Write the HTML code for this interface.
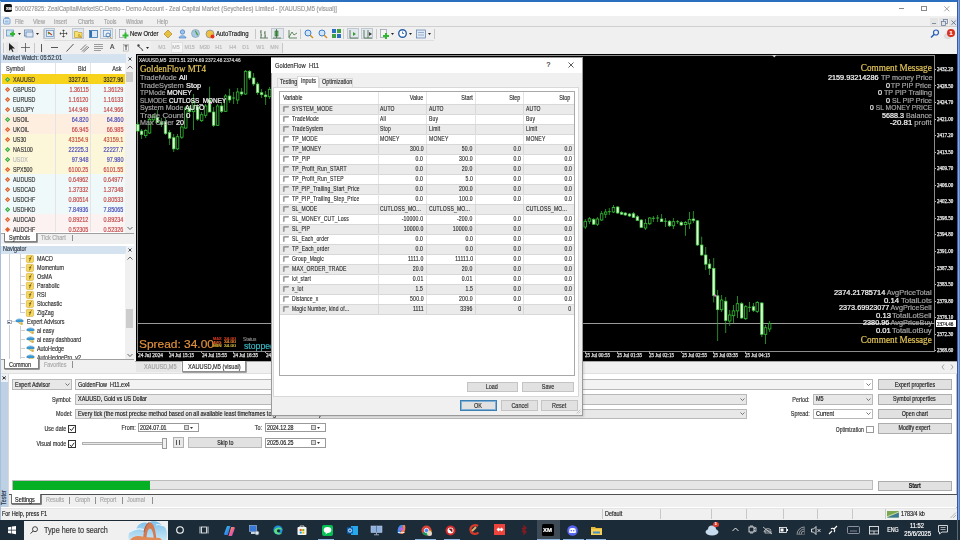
<!DOCTYPE html>
<html><head><meta charset="utf-8">
<style>
*{box-sizing:border-box;margin:0;padding:0}
html,body{width:960px;height:540px;overflow:hidden;background:#f0f0f0;font-family:"Liberation Sans",sans-serif;color:#222}
.a{position:absolute}
.t{position:absolute;white-space:pre;line-height:1;-webkit-text-stroke:0.18px currentColor}
svg{position:absolute;overflow:visible}
</style></head><body>
<div class="a" style="left:0px;top:0px;width:960px;height:520px;background:#f0f0f0;"></div>
<div class="a" style="left:0px;top:0px;width:960px;height:16px;background:#ffffff;"></div>
<div class="a" style="left:0px;top:0px;width:960px;height:1.5px;background:#2b70c0;"></div>
<div class="a" style="left:4.4px;top:4.1px;width:8px;height:8.4px;background:#111;border-radius:1.8px"></div>
<div class="t" style="left:5.60px;top:6.61px;font-size:4px;color:#fff;font-weight:bold;transform:scaleX(0.9333);transform-origin:0 0;font-family:'Liberation Sans',sans-serif;">XM</div>
<div class="t" style="left:15.00px;top:5.17px;font-size:7px;color:#979797;transform:scaleX(0.8352);transform-origin:0 0;font-family:'Liberation Sans',sans-serif;">500027825: ZealCapitalMarketSC-Demo - Demo Account - Zeal Capital Market (Seychelles) Limited - [XAUUSD,M5 (visual)]</div>
<div class="a" style="left:899.3px;top:8.2px;width:4.8px;height:0.8px;background:#8a8a8a;"></div>
<div class="a" style="left:921px;top:6px;width:5.8px;height:5.2px;background:transparent;border:0.8px solid #8a8a8a"></div>
<svg style="left:944.2px;top:5.8px" width="6" height="6"><path d="M0.3 0.3L5.3 5.3M5.3 0.3L0.3 5.3" stroke="#8a8a8a" stroke-width="0.8"/></svg>
<div class="a" style="left:956.6px;top:0px;width:3.4px;height:520px;background:linear-gradient(90deg,#3458a8 0,#3458a8 1px,#7ea4e0 1.2px,#8aaee6 2.2px,#4a6cb8 2.6px,#4a6cb8 3.4px);"></div>
<div class="a" style="left:0px;top:1px;width:1px;height:519px;background:#a8c0dc;"></div>
<div class="a" style="left:1px;top:16px;width:956px;height:10px;background:#f0f0f0;"></div>
<div class="a" style="left:1px;top:25.6px;width:956px;height:0.9px;background:#d0d0d0;"></div>
<svg style="left:3px;top:17px" width="8" height="8"><rect x="0.5" y="1.5" width="6.5" height="5.5" rx="1" fill="#d8e6f6" stroke="#6a98cc" stroke-width="0.8"/><path d="M2 1.5v-1h3.5v1" stroke="#6a98cc" stroke-width="0.8" fill="none"/><rect x="2" y="3.5" width="3.5" height="2" fill="#9cbce0"/></svg>
<div class="t" style="left:14.70px;top:18.74px;font-size:6.8px;color:#a2a2a2;transform:scaleX(0.7940);transform-origin:0 0;font-family:'Liberation Sans',sans-serif;">File</div>
<div class="t" style="left:33.00px;top:18.74px;font-size:6.8px;color:#a2a2a2;transform:scaleX(0.8210);transform-origin:0 0;font-family:'Liberation Sans',sans-serif;">View</div>
<div class="t" style="left:54.00px;top:18.74px;font-size:6.8px;color:#a2a2a2;transform:scaleX(0.7644);transform-origin:0 0;font-family:'Liberation Sans',sans-serif;">Insert</div>
<div class="t" style="left:78.00px;top:18.74px;font-size:6.8px;color:#a2a2a2;transform:scaleX(0.7989);transform-origin:0 0;font-family:'Liberation Sans',sans-serif;">Charts</div>
<div class="t" style="left:104.00px;top:18.74px;font-size:6.8px;color:#a2a2a2;transform:scaleX(0.7874);transform-origin:0 0;font-family:'Liberation Sans',sans-serif;">Tools</div>
<div class="t" style="left:126.00px;top:18.74px;font-size:6.8px;color:#a2a2a2;transform:scaleX(0.7029);transform-origin:0 0;font-family:'Liberation Sans',sans-serif;">Window</div>
<div class="t" style="left:157.00px;top:18.74px;font-size:6.8px;color:#a2a2a2;transform:scaleX(0.7865);transform-origin:0 0;font-family:'Liberation Sans',sans-serif;">Help</div>
<div class="a" style="left:929.5px;top:17.5px;width:8.8px;height:8.3px;background:#e4e4e4;"></div>
<div class="a" style="left:939px;top:17.5px;width:8.8px;height:8.3px;background:#e4e4e4;"></div>
<div class="a" style="left:948.5px;top:17.5px;width:8.8px;height:8.3px;background:#e4e4e4;"></div>
<div class="a" style="left:932.2px;top:22.6px;width:3.4px;height:1px;background:#8090a0;"></div>
<svg style="left:940.5px;top:18.8px" width="7" height="7"><rect x="2.5" y="0.5" width="4" height="4" fill="none" stroke="#7080a0" stroke-width="0.8"/><rect x="0.5" y="2.5" width="4" height="4" fill="#e3e3e3" stroke="#7080a0" stroke-width="0.8"/></svg>
<svg style="left:951px;top:19.6px" width="6" height="6"><path d="M0.5 0.5L4.8 4.8M4.8 0.5L0.5 4.8" stroke="#607090" stroke-width="0.9"/></svg>
<div class="a" style="left:3px;top:29px;width:1px;height:10px;background:#c8c8c8;"></div>
<div class="a" style="left:42.5px;top:29px;width:1px;height:10px;background:#c8c8c8;"></div>
<div class="a" style="left:115.3px;top:29px;width:1px;height:10px;background:#c8c8c8;"></div>
<div class="a" style="left:434px;top:29px;width:1px;height:10px;background:#c8c8c8;"></div>
<div class="a" style="left:44px;top:40px;width:390px;height:0.8px;background:#dedede;"></div>
<svg style="left:6px;top:29px" width="10" height="10"><rect x="0.5" y="1" width="7" height="6" fill="#cfe0f0" stroke="#5a8cc0" stroke-width="0.7"/><path d="M4 5h5M6.5 2.5v5" stroke="#2eb82e" stroke-width="2"/></svg>
<svg style="left:17.5px;top:32.5px" width="4" height="3"><path d="M0 0h3l-1.5 2z" fill="#222"/></svg>
<svg style="left:24px;top:29px" width="10" height="10"><rect x="0.5" y="1" width="8" height="6" fill="#dde8f4" stroke="#5a7ca8" stroke-width="0.7"/><rect x="2" y="3" width="7" height="5" fill="#dde8f4" stroke="#5a7ca8" stroke-width="0.7"/></svg>
<svg style="left:35.5px;top:32.5px" width="4" height="3"><path d="M0 0h3l-1.5 2z" fill="#222"/></svg>
<div class="a" style="left:44px;top:28px;width:11px;height:11px;background:#dde6ee;border:0.7px solid #b8c4d0"></div>
<svg style="left:46px;top:30px" width="10" height="10"><rect x="0.5" y="0.5" width="7" height="6" fill="#e8f0f8" stroke="#5a8cc0" stroke-width="0.7"/><path d="M2 2l4 3" stroke="#d04020" stroke-width="1.2"/><path d="M2 4l2 -1" stroke="#30a030" stroke-width="1.2"/></svg>
<svg style="left:59px;top:29px" width="10" height="10"><path d="M4.5 1v7M1 4.5h7" stroke="#444" stroke-width="0.7"/><path d="M4.5 0.5l-1.5 1.5h3zM4.5 8.5l-1.5-1.5h3zM0.5 4.5l1.5-1.5v3zM8.5 4.5l-1.5-1.5v3z" fill="#444"/></svg>
<div class="a" style="left:72px;top:28px;width:12px;height:11px;background:#e2e8ee;border:0.7px solid #c0c8d0"></div>
<svg style="left:74px;top:30px" width="10" height="10"><path d="M0.5 1.5h3l1 1h3.5v5h-7.5z" fill="#f8e070" stroke="#b89020" stroke-width="0.6"/><path d="M5 4l2.5 3.5L4 6z" fill="#f0d040" stroke="#a08020" stroke-width="0.5"/></svg>
<svg style="left:89px;top:30px" width="10" height="10"><rect x="0.5" y="0.5" width="8" height="7" fill="#dce8f4" stroke="#3070b0" stroke-width="0.8"/><rect x="1" y="1" width="2" height="6" fill="#3070b0"/></svg>
<div class="a" style="left:100.3px;top:28.2px;width:12.5px;height:10.6px;background:#e2e8ee;border:0.7px solid #c0c8d0"></div>
<svg style="left:102.5px;top:30px" width="10" height="10"><rect x="0.5" y="0.5" width="7" height="6" fill="#e8f0f8" stroke="#6090c0" stroke-width="0.7"/><circle cx="5" cy="5" r="2" fill="none" stroke="#3070b0" stroke-width="0.8"/><path d="M6.5 6.5l2 2" stroke="#d09020" stroke-width="1"/></svg>
<svg style="left:119px;top:29px" width="10" height="10"><rect x="0.5" y="0.5" width="6" height="8" fill="#f4f4f4" stroke="#8090a0" stroke-width="0.6"/><path d="M3.5 6.5h6M6.5 3.5v6" stroke="#2eb82e" stroke-width="2"/></svg>
<div class="t" style="left:129.70px;top:29.97px;font-size:7px;color:#1a1a1a;transform:scaleX(0.8422);transform-origin:0 0;font-family:'Liberation Sans',sans-serif;">New Order</div>
<svg style="left:163px;top:29px" width="10" height="10"><path d="M1 5l4-4 4 4-4 4z" fill="#e8c040" stroke="#a07818" stroke-width="0.6"/></svg>
<svg style="left:177.5px;top:29px" width="10" height="10"><circle cx="4.5" cy="3" r="2.2" fill="#9cc4ec" stroke="#3070c0" stroke-width="0.6"/><path d="M1 9c0-3 7-3 7 0z" fill="#9cc4ec" stroke="#3070c0" stroke-width="0.6"/></svg>
<svg style="left:191px;top:29px" width="10" height="10"><circle cx="4.5" cy="4.5" r="4" fill="#a8c8e0" stroke="#6a8aa8" stroke-width="0.5"/><path d="M4 2c2 1 1 3 3 4" stroke="#40a040" stroke-width="1.2"/></svg>
<svg style="left:205px;top:29px" width="10" height="10"><circle cx="5" cy="5" r="4" fill="#f0c040" stroke="#6080b0" stroke-width="0.6"/><circle cx="7.5" cy="7.5" r="2" fill="#e03020"/></svg>
<div class="t" style="left:216.00px;top:29.97px;font-size:7px;color:#1a1a1a;transform:scaleX(0.8581);transform-origin:0 0;font-family:'Liberation Sans',sans-serif;">AutoTrading</div>
<div class="a" style="left:254.5px;top:29px;width:1px;height:10px;background:#c8c8c8;"></div>
<svg style="left:258.5px;top:29px" width="10" height="10"><path d="M2 1v8M1 3h1M2 6h1M6 2v7M5 4h1M6 7h1M1 9h8" stroke="#406040" stroke-width="0.8"/></svg>
<div class="a" style="left:271px;top:28px;width:12.5px;height:11px;background:#e2e8ee;border:0.7px solid #c0c8d0"></div>
<svg style="left:273.3px;top:29px" width="10" height="10"><rect x="2" y="2" width="3" height="5" fill="#60c060" stroke="#306030" stroke-width="0.6"/><path d="M3.5 0v9M0 9h8" stroke="#306030" stroke-width="0.7"/></svg>
<svg style="left:287.5px;top:29px" width="10" height="10"><path d="M1 1v8h8M1 8l3-5 2 3 3-2" fill="none" stroke="#407040" stroke-width="0.8"/></svg>
<div class="a" style="left:300px;top:29px;width:1px;height:10px;background:#c8c8c8;"></div>
<svg style="left:303.5px;top:29px" width="10" height="10"><circle cx="4" cy="4" r="3" fill="#cfe4f8" stroke="#3a80c8" stroke-width="1"/><path d="M6 6l3 3" stroke="#d09020" stroke-width="1.4"/></svg>
<svg style="left:317.5px;top:29px" width="10" height="10"><circle cx="4" cy="4" r="3" fill="#cfe4f8" stroke="#3a80c8" stroke-width="1"/><path d="M6 6l3 3" stroke="#d09020" stroke-width="1.4"/></svg>
<svg style="left:332px;top:29px" width="10" height="10"><rect x="0" y="0" width="4" height="4" fill="#2a70c0"/><rect x="5" y="0" width="4" height="4" fill="#40a040"/><rect x="0" y="5" width="4" height="4" fill="#40a040"/><rect x="5" y="5" width="4" height="4" fill="#2a70c0"/></svg>
<div class="a" style="left:343px;top:29px;width:1px;height:10px;background:#c8c8c8;"></div>
<div class="a" style="left:347px;top:28px;width:12px;height:11px;background:#e2e8ee;border:0.7px solid #c0c8d0"></div>
<svg style="left:349px;top:29px" width="10" height="10"><path d="M1 1v8h8" fill="none" stroke="#406040" stroke-width="0.8"/><path d="M4 3l3 2-3 2z" fill="#30a030"/></svg>
<div class="a" style="left:361px;top:28px;width:12px;height:11px;background:#e2e8ee;border:0.7px solid #c0c8d0"></div>
<svg style="left:363px;top:29px" width="10" height="10"><path d="M1 1v8h8M5 1v8" fill="none" stroke="#406040" stroke-width="0.8"/><path d="M6 3l3 2-3 2z" fill="#404040"/></svg>
<div class="a" style="left:376px;top:29px;width:1px;height:10px;background:#c8c8c8;"></div>
<svg style="left:380px;top:29px" width="10" height="10"><rect x="0.5" y="0.5" width="6" height="8" fill="#f4f4f4" stroke="#8090a0" stroke-width="0.6"/><path d="M3 7h6M6 4v6" stroke="#2eb82e" stroke-width="2"/></svg>
<svg style="left:391px;top:32.5px" width="4" height="3"><path d="M0 0h3l-1.5 2z" fill="#222"/></svg>
<svg style="left:398px;top:29px" width="10" height="10"><circle cx="4.5" cy="4.5" r="3.8" fill="#fff" stroke="#2a60a8" stroke-width="1.4"/><path d="M4.5 2.5v2h1.5" stroke="#2a60a8" stroke-width="0.8" fill="none"/></svg>
<svg style="left:409px;top:32.5px" width="4" height="3"><path d="M0 0h3l-1.5 2z" fill="#222"/></svg>
<svg style="left:416px;top:29px" width="10" height="10"><rect x="0.5" y="1" width="9" height="8" fill="#dde8f4" stroke="#5a7ca8" stroke-width="0.7"/><path d="M2 6h6M2 3.5h6" stroke="#8aa0c0" stroke-width="0.8"/></svg>
<svg style="left:428px;top:32.5px" width="4" height="3"><path d="M0 0h3l-1.5 2z" fill="#222"/></svg>
<svg style="left:930px;top:29px" width="10" height="10"><circle cx="6" cy="3.5" r="2.5" fill="none" stroke="#2a60b8" stroke-width="1.2"/><path d="M4.3 5.2L1 8.5" stroke="#2a60b8" stroke-width="1.5"/></svg>
<svg style="left:944px;top:31px" width="10" height="10"><ellipse cx="4" cy="5" rx="3.5" ry="2.5" fill="#e0e0e0" stroke="#c0c0c0" stroke-width="0.5"/></svg>
<div class="a" style="left:947.2px;top:28.9px;width:7.8px;height:8.2px;background:#d93020;border-radius:50%"></div>
<div class="t" style="left:949.57px;top:30.54px;font-size:5.5px;color:#fff;font-weight:bold;transform-origin:50% 0;font-family:'Liberation Sans',sans-serif;">1</div>
<div class="a" style="left:3px;top:43px;width:1px;height:10px;background:#c8c8c8;"></div>
<div class="a" style="left:33.7px;top:43px;width:1px;height:10px;background:#c8c8c8;"></div>
<div class="a" style="left:154px;top:43px;width:1px;height:10px;background:#c8c8c8;"></div>
<div class="a" style="left:282px;top:43px;width:1px;height:10px;background:#c8c8c8;"></div>
<div class="a" style="left:6px;top:42px;width:12px;height:11px;background:#e8e8e8;"></div>
<svg style="left:8px;top:43px" width="10" height="10"><path d="M1 0v8l2-2 1.5 3 1-0.5-1.5-3h3z" fill="#222"/></svg>
<svg style="left:21px;top:43px" width="10" height="10"><path d="M4.5 0v9M0 4.5h9" stroke="#555" stroke-width="0.8"/></svg>
<svg style="left:40px;top:43px" width="4" height="10"><path d="M1.5 1v8" stroke="#444" stroke-width="0.9"/></svg>
<svg style="left:51px;top:43px" width="10" height="10"><path d="M0 4.5h7" stroke="#444" stroke-width="0.9"/></svg>
<svg style="left:66px;top:43px" width="10" height="10"><path d="M0.5 8.5L7.5 1" stroke="#444" stroke-width="0.9"/></svg>
<svg style="left:80px;top:43px" width="10" height="10"><path d="M0.5 7L6 1.5M2 8.5L7.5 3M3.5 9L9 4" stroke="#555" stroke-width="0.8"/></svg>
<svg style="left:94px;top:43px" width="10" height="10"><path d="M0 1.5h9M0 3.5h9M0 5.5h9M0 7.5h7" stroke="#777" stroke-width="0.7"/></svg>
<div class="t" style="left:109.60px;top:44.41px;font-size:6.6px;color:#444;transform:scaleX(0.9995);transform-origin:0 0;font-family:'Liberation Sans',sans-serif;">A</div>
<svg style="left:123.3px;top:44px" width="7" height="8"><rect x="0.4" y="0.4" width="5.2" height="6.6" fill="#f8f8f8" stroke="#909090" stroke-width="0.5"/><path d="M1.5 1.8h3M3 1.8v4.2" stroke="#444" stroke-width="1"/></svg>
<svg style="left:137px;top:43.5px" width="10" height="10"><circle cx="1.5" cy="1.5" r="1.2" fill="#444"/><path d="M1.5 2.5l4 3" stroke="#444" stroke-width="0.9"/><path d="M4.5 5l2 1.2L5 7z" fill="#444"/></svg>
<svg style="left:146px;top:47px" width="4" height="3"><path d="M0 0h3l-1.5 2z" fill="#222"/></svg>
<div class="a" style="left:151px;top:41px;width:131px;height:12.5px;background:#ececec;"></div>
<div class="a" style="left:171px;top:41.5px;width:12px;height:11.5px;background:#f6f6f6;border:0.6px solid #e0e0e0"></div>
<div class="t" style="left:158.37px;top:45.09px;font-size:5.8px;color:#b8b8b8;transform:scaleX(0.9200);transform-origin:50% 0;font-family:'Liberation Sans',sans-serif;">M1</div>
<div class="t" style="left:172.17px;top:45.09px;font-size:5.8px;color:#b8b8b8;transform:scaleX(0.9200);transform-origin:50% 0;font-family:'Liberation Sans',sans-serif;">M5</div>
<div class="t" style="left:184.36px;top:45.09px;font-size:5.8px;color:#b8b8b8;transform:scaleX(0.9200);transform-origin:50% 0;font-family:'Liberation Sans',sans-serif;">M15</div>
<div class="t" style="left:199.06px;top:45.09px;font-size:5.8px;color:#b8b8b8;transform:scaleX(0.9200);transform-origin:50% 0;font-family:'Liberation Sans',sans-serif;">M30</div>
<div class="t" style="left:214.79px;top:45.09px;font-size:5.8px;color:#b8b8b8;transform:scaleX(0.9200);transform-origin:50% 0;font-family:'Liberation Sans',sans-serif;">H1</div>
<div class="t" style="left:228.69px;top:45.09px;font-size:5.8px;color:#b8b8b8;transform:scaleX(0.9200);transform-origin:50% 0;font-family:'Liberation Sans',sans-serif;">H4</div>
<div class="t" style="left:242.49px;top:45.09px;font-size:5.8px;color:#b8b8b8;transform:scaleX(0.9200);transform-origin:50% 0;font-family:'Liberation Sans',sans-serif;">D1</div>
<div class="t" style="left:256.45px;top:45.09px;font-size:5.8px;color:#b8b8b8;transform:scaleX(0.9200);transform-origin:50% 0;font-family:'Liberation Sans',sans-serif;">W1</div>
<div class="t" style="left:270.09px;top:45.09px;font-size:5.8px;color:#b8b8b8;transform:scaleX(0.9200);transform-origin:50% 0;font-family:'Liberation Sans',sans-serif;">MN</div>
<div class="a" style="left:1px;top:54px;width:133px;height:189px;background:#ffffff;"></div>
<div class="a" style="left:1px;top:54px;width:125px;height:8.5px;background:#d5e3f1;"></div>
<div class="a" style="left:126px;top:54px;width:8px;height:8.5px;background:#eef2f6;"></div>
<div class="t" style="left:3.00px;top:54.84px;font-size:6.8px;color:#303a48;transform:scaleX(0.8202);transform-origin:0 0;font-family:'Liberation Sans',sans-serif;">Market Watch: 05:52:01</div>
<svg style="left:128px;top:56.6px" width="5" height="5"><path d="M0.5 0.5L3.5 3.5M3.5 0.5L0.5 3.5" stroke="#333" stroke-width="0.9"/></svg>
<div class="a" style="left:1px;top:62.5px;width:124px;height:11.5px;background:#ffffff;"></div>
<div class="a" style="left:54.5px;top:62.5px;width:0.8px;height:11.5px;background:#e4e4e4;"></div>
<div class="a" style="left:89.5px;top:62.5px;width:0.8px;height:11.5px;background:#e4e4e4;"></div>
<div class="a" style="left:1px;top:73.5px;width:124px;height:0.6px;background:#e8e8e8;"></div>
<div class="t" style="left:5.50px;top:64.87px;font-size:7px;color:#383838;transform:scaleX(0.8000);transform-origin:0 0;font-family:'Liberation Sans',sans-serif;">Symbol</div>
<div class="t" style="left:75.88px;top:64.87px;font-size:7px;color:#383838;transform:scaleX(0.8000);transform-origin:100% 0;font-family:'Liberation Sans',sans-serif;">Bid</div>
<div class="t" style="left:109.83px;top:64.87px;font-size:7px;color:#383838;transform:scaleX(0.8000);transform-origin:100% 0;font-family:'Liberation Sans',sans-serif;">Ask</div>
<div class="a" style="left:125px;top:62.5px;width:8.5px;height:170px;background:#f0f0f0;"></div>
<div class="a" style="left:125.5px;top:71.5px;width:7.5px;height:10px;background:#cdcdcd;"></div>
<svg style="left:126.5px;top:64.5px" width="6" height="5"><path d="M0.5 3.5L3 1l2.5 2.5" fill="none" stroke="#555" stroke-width="0.9"/></svg>
<svg style="left:126.5px;top:226px" width="6" height="5"><path d="M0.5 1L3 3.5L5.5 1" fill="none" stroke="#555" stroke-width="0.9"/></svg>
<div class="a" style="left:2px;top:74.2px;width:123px;height:10px;background:#f8d31c;"></div>
<div class="a" style="left:54.5px;top:74.2px;width:0.7px;height:10px;background:#f8d31c;"></div>
<div class="a" style="left:89.5px;top:74.2px;width:0.7px;height:10px;background:#f8d31c;"></div>
<div class="a" style="left:2px;top:83.60000000000001px;width:123px;height:0.6px;background:#e8c818;"></div>
<svg style="left:4.5px;top:76.60000000000001px" width="6" height="6"><path d="M2.6 0L5.2 2.6L2.6 5.2L0 2.6z" fill="#30a83a"/><circle cx="2.6" cy="2.6" r="1" fill="#a0e0a0"/></svg>
<div class="t" style="left:12.60px;top:75.87px;font-size:7px;color:#383838;transform:scaleX(0.7600);transform-origin:0 0;font-family:'Liberation Sans',sans-serif;">XAUUSD</div>
<div class="t" style="left:63.00px;top:75.87px;font-size:7px;color:#2a2a2a;transform:scaleX(0.7800);transform-origin:100% 0;font-family:'Liberation Sans',sans-serif;">3327.61</div>
<div class="t" style="left:97.70px;top:75.87px;font-size:7px;color:#2a2a2a;transform:scaleX(0.7800);transform-origin:100% 0;font-family:'Liberation Sans',sans-serif;">3327.96</div>
<div class="a" style="left:2px;top:84.2px;width:123px;height:10px;background:#eff9f9;"></div>
<div class="a" style="left:54.5px;top:84.2px;width:0.7px;height:10px;background:#e4e4e4;"></div>
<div class="a" style="left:89.5px;top:84.2px;width:0.7px;height:10px;background:#e4e4e4;"></div>
<div class="a" style="left:2px;top:93.60000000000001px;width:123px;height:0.6px;background:#e6e6e6;"></div>
<svg style="left:4.5px;top:86.60000000000001px" width="6" height="6"><path d="M2.6 0L5.2 2.6L2.6 5.2L0 2.6z" fill="#e0602c"/><circle cx="2.6" cy="2.6" r="0.9" fill="#f8b090"/></svg>
<div class="t" style="left:12.60px;top:85.87px;font-size:7px;color:#383838;transform:scaleX(0.7600);transform-origin:0 0;font-family:'Liberation Sans',sans-serif;">GBPUSD</div>
<div class="t" style="left:63.52px;top:85.87px;font-size:7px;color:#c44848;transform:scaleX(0.7800);transform-origin:100% 0;font-family:'Liberation Sans',sans-serif;">1.36115</div>
<div class="t" style="left:97.70px;top:85.87px;font-size:7px;color:#c44848;transform:scaleX(0.7800);transform-origin:100% 0;font-family:'Liberation Sans',sans-serif;">1.36129</div>
<div class="a" style="left:2px;top:94.2px;width:123px;height:10px;background:#eff9f9;"></div>
<div class="a" style="left:54.5px;top:94.2px;width:0.7px;height:10px;background:#e4e4e4;"></div>
<div class="a" style="left:89.5px;top:94.2px;width:0.7px;height:10px;background:#e4e4e4;"></div>
<div class="a" style="left:2px;top:103.60000000000001px;width:123px;height:0.6px;background:#e6e6e6;"></div>
<svg style="left:4.5px;top:96.60000000000001px" width="6" height="6"><path d="M2.6 0L5.2 2.6L2.6 5.2L0 2.6z" fill="#e0602c"/><circle cx="2.6" cy="2.6" r="0.9" fill="#f8b090"/></svg>
<div class="t" style="left:12.60px;top:95.87px;font-size:7px;color:#383838;transform:scaleX(0.7600);transform-origin:0 0;font-family:'Liberation Sans',sans-serif;">EURUSD</div>
<div class="t" style="left:63.00px;top:95.87px;font-size:7px;color:#c44848;transform:scaleX(0.7800);transform-origin:100% 0;font-family:'Liberation Sans',sans-serif;">1.16120</div>
<div class="t" style="left:97.70px;top:95.87px;font-size:7px;color:#c44848;transform:scaleX(0.7800);transform-origin:100% 0;font-family:'Liberation Sans',sans-serif;">1.16133</div>
<div class="a" style="left:2px;top:104.2px;width:123px;height:10px;background:#eff9f9;"></div>
<div class="a" style="left:54.5px;top:104.2px;width:0.7px;height:10px;background:#e4e4e4;"></div>
<div class="a" style="left:89.5px;top:104.2px;width:0.7px;height:10px;background:#e4e4e4;"></div>
<div class="a" style="left:2px;top:113.60000000000001px;width:123px;height:0.6px;background:#e6e6e6;"></div>
<svg style="left:4.5px;top:106.60000000000001px" width="6" height="6"><path d="M2.6 0L5.2 2.6L2.6 5.2L0 2.6z" fill="#e0602c"/><circle cx="2.6" cy="2.6" r="0.9" fill="#f8b090"/></svg>
<div class="t" style="left:12.60px;top:105.87px;font-size:7px;color:#383838;transform:scaleX(0.7600);transform-origin:0 0;font-family:'Liberation Sans',sans-serif;">USDJPY</div>
<div class="t" style="left:63.00px;top:105.87px;font-size:7px;color:#c44848;transform:scaleX(0.7800);transform-origin:100% 0;font-family:'Liberation Sans',sans-serif;">144.949</div>
<div class="t" style="left:97.70px;top:105.87px;font-size:7px;color:#c44848;transform:scaleX(0.7800);transform-origin:100% 0;font-family:'Liberation Sans',sans-serif;">144.966</div>
<div class="a" style="left:2px;top:114.2px;width:123px;height:10px;background:#fdeee0;"></div>
<div class="a" style="left:54.5px;top:114.2px;width:0.7px;height:10px;background:#e4e4e4;"></div>
<div class="a" style="left:89.5px;top:114.2px;width:0.7px;height:10px;background:#e4e4e4;"></div>
<div class="a" style="left:2px;top:123.60000000000001px;width:123px;height:0.6px;background:#e6e6e6;"></div>
<svg style="left:4.5px;top:116.60000000000001px" width="6" height="6"><path d="M2.6 0L5.2 2.6L2.6 5.2L0 2.6z" fill="#30a83a"/><circle cx="2.6" cy="2.6" r="1" fill="#a0e0a0"/></svg>
<div class="t" style="left:12.60px;top:115.87px;font-size:7px;color:#383838;transform:scaleX(0.7600);transform-origin:0 0;font-family:'Liberation Sans',sans-serif;">USOIL</div>
<div class="t" style="left:66.89px;top:115.87px;font-size:7px;color:#4848b4;transform:scaleX(0.7800);transform-origin:100% 0;font-family:'Liberation Sans',sans-serif;">64.820</div>
<div class="t" style="left:101.59px;top:115.87px;font-size:7px;color:#4848b4;transform:scaleX(0.7800);transform-origin:100% 0;font-family:'Liberation Sans',sans-serif;">64.860</div>
<div class="a" style="left:2px;top:124.2px;width:123px;height:10px;background:#fdeee0;"></div>
<div class="a" style="left:54.5px;top:124.2px;width:0.7px;height:10px;background:#e4e4e4;"></div>
<div class="a" style="left:89.5px;top:124.2px;width:0.7px;height:10px;background:#e4e4e4;"></div>
<div class="a" style="left:2px;top:133.6px;width:123px;height:0.6px;background:#e6e6e6;"></div>
<svg style="left:4.5px;top:126.60000000000001px" width="6" height="6"><path d="M2.6 0L5.2 2.6L2.6 5.2L0 2.6z" fill="#e0602c"/><circle cx="2.6" cy="2.6" r="0.9" fill="#f8b090"/></svg>
<div class="t" style="left:12.60px;top:125.87px;font-size:7px;color:#383838;transform:scaleX(0.7600);transform-origin:0 0;font-family:'Liberation Sans',sans-serif;">UKOIL</div>
<div class="t" style="left:66.89px;top:125.87px;font-size:7px;color:#c44848;transform:scaleX(0.7800);transform-origin:100% 0;font-family:'Liberation Sans',sans-serif;">66.945</div>
<div class="t" style="left:101.59px;top:125.87px;font-size:7px;color:#c44848;transform:scaleX(0.7800);transform-origin:100% 0;font-family:'Liberation Sans',sans-serif;">66.985</div>
<div class="a" style="left:2px;top:134.2px;width:123px;height:10px;background:#fdf7da;"></div>
<div class="a" style="left:54.5px;top:134.2px;width:0.7px;height:10px;background:#e4e4e4;"></div>
<div class="a" style="left:89.5px;top:134.2px;width:0.7px;height:10px;background:#e4e4e4;"></div>
<div class="a" style="left:2px;top:143.6px;width:123px;height:0.6px;background:#e6e6e6;"></div>
<svg style="left:4.5px;top:136.6px" width="6" height="6"><path d="M2.6 0L5.2 2.6L2.6 5.2L0 2.6z" fill="#e0602c"/><circle cx="2.6" cy="2.6" r="0.9" fill="#f8b090"/></svg>
<div class="t" style="left:12.60px;top:135.87px;font-size:7px;color:#383838;transform:scaleX(0.7600);transform-origin:0 0;font-family:'Liberation Sans',sans-serif;">US30</div>
<div class="t" style="left:63.00px;top:135.87px;font-size:7px;color:#c05038;transform:scaleX(0.7800);transform-origin:100% 0;font-family:'Liberation Sans',sans-serif;">43154.9</div>
<div class="t" style="left:97.70px;top:135.87px;font-size:7px;color:#c05038;transform:scaleX(0.7800);transform-origin:100% 0;font-family:'Liberation Sans',sans-serif;">43159.1</div>
<div class="a" style="left:2px;top:144.2px;width:123px;height:10px;background:#fdf7da;"></div>
<div class="a" style="left:54.5px;top:144.2px;width:0.7px;height:10px;background:#e4e4e4;"></div>
<div class="a" style="left:89.5px;top:144.2px;width:0.7px;height:10px;background:#e4e4e4;"></div>
<div class="a" style="left:2px;top:153.6px;width:123px;height:0.6px;background:#e6e6e6;"></div>
<svg style="left:4.5px;top:146.6px" width="6" height="6"><path d="M2.6 0L5.2 2.6L2.6 5.2L0 2.6z" fill="#30a83a"/><circle cx="2.6" cy="2.6" r="1" fill="#a0e0a0"/></svg>
<div class="t" style="left:12.60px;top:145.87px;font-size:7px;color:#383838;transform:scaleX(0.7600);transform-origin:0 0;font-family:'Liberation Sans',sans-serif;">NAS100</div>
<div class="t" style="left:63.00px;top:145.87px;font-size:7px;color:#4848b4;transform:scaleX(0.7800);transform-origin:100% 0;font-family:'Liberation Sans',sans-serif;">22225.3</div>
<div class="t" style="left:97.70px;top:145.87px;font-size:7px;color:#4848b4;transform:scaleX(0.7800);transform-origin:100% 0;font-family:'Liberation Sans',sans-serif;">22227.7</div>
<div class="a" style="left:2px;top:154.2px;width:123px;height:10px;background:#fdf7da;"></div>
<div class="a" style="left:54.5px;top:154.2px;width:0.7px;height:10px;background:#e4e4e4;"></div>
<div class="a" style="left:89.5px;top:154.2px;width:0.7px;height:10px;background:#e4e4e4;"></div>
<div class="a" style="left:2px;top:163.6px;width:123px;height:0.6px;background:#e6e6e6;"></div>
<svg style="left:4.5px;top:156.6px" width="6" height="6"><path d="M2.6 0L5.2 2.6L2.6 5.2L0 2.6z" fill="#30a83a"/><circle cx="2.6" cy="2.6" r="1" fill="#a0e0a0"/></svg>
<div class="t" style="left:12.60px;top:155.87px;font-size:7px;color:#b8b8b8;transform:scaleX(0.7600);transform-origin:0 0;font-family:'Liberation Sans',sans-serif;">USDX</div>
<div class="t" style="left:66.89px;top:155.87px;font-size:7px;color:#4848b4;transform:scaleX(0.7800);transform-origin:100% 0;font-family:'Liberation Sans',sans-serif;">97.948</div>
<div class="t" style="left:101.59px;top:155.87px;font-size:7px;color:#4848b4;transform:scaleX(0.7800);transform-origin:100% 0;font-family:'Liberation Sans',sans-serif;">97.980</div>
<div class="a" style="left:2px;top:164.2px;width:123px;height:10px;background:#fdf7da;"></div>
<div class="a" style="left:54.5px;top:164.2px;width:0.7px;height:10px;background:#e4e4e4;"></div>
<div class="a" style="left:89.5px;top:164.2px;width:0.7px;height:10px;background:#e4e4e4;"></div>
<div class="a" style="left:2px;top:173.6px;width:123px;height:0.6px;background:#e6e6e6;"></div>
<svg style="left:4.5px;top:166.6px" width="6" height="6"><path d="M2.6 0L5.2 2.6L2.6 5.2L0 2.6z" fill="#e0602c"/><circle cx="2.6" cy="2.6" r="0.9" fill="#f8b090"/></svg>
<div class="t" style="left:12.60px;top:165.87px;font-size:7px;color:#383838;transform:scaleX(0.7600);transform-origin:0 0;font-family:'Liberation Sans',sans-serif;">SPX500</div>
<div class="t" style="left:63.00px;top:165.87px;font-size:7px;color:#c44848;transform:scaleX(0.7800);transform-origin:100% 0;font-family:'Liberation Sans',sans-serif;">6100.25</div>
<div class="t" style="left:97.70px;top:165.87px;font-size:7px;color:#c44848;transform:scaleX(0.7800);transform-origin:100% 0;font-family:'Liberation Sans',sans-serif;">6101.55</div>
<div class="a" style="left:2px;top:174.2px;width:123px;height:10px;background:#eff9f9;"></div>
<div class="a" style="left:54.5px;top:174.2px;width:0.7px;height:10px;background:#e4e4e4;"></div>
<div class="a" style="left:89.5px;top:174.2px;width:0.7px;height:10px;background:#e4e4e4;"></div>
<div class="a" style="left:2px;top:183.6px;width:123px;height:0.6px;background:#e6e6e6;"></div>
<svg style="left:4.5px;top:176.6px" width="6" height="6"><path d="M2.6 0L5.2 2.6L2.6 5.2L0 2.6z" fill="#e0602c"/><circle cx="2.6" cy="2.6" r="0.9" fill="#f8b090"/></svg>
<div class="t" style="left:12.60px;top:175.87px;font-size:7px;color:#383838;transform:scaleX(0.7600);transform-origin:0 0;font-family:'Liberation Sans',sans-serif;">AUDUSD</div>
<div class="t" style="left:63.00px;top:175.87px;font-size:7px;color:#c44848;transform:scaleX(0.7800);transform-origin:100% 0;font-family:'Liberation Sans',sans-serif;">0.64962</div>
<div class="t" style="left:97.70px;top:175.87px;font-size:7px;color:#c44848;transform:scaleX(0.7800);transform-origin:100% 0;font-family:'Liberation Sans',sans-serif;">0.64977</div>
<div class="a" style="left:2px;top:184.2px;width:123px;height:10px;background:#eff9f9;"></div>
<div class="a" style="left:54.5px;top:184.2px;width:0.7px;height:10px;background:#e4e4e4;"></div>
<div class="a" style="left:89.5px;top:184.2px;width:0.7px;height:10px;background:#e4e4e4;"></div>
<div class="a" style="left:2px;top:193.6px;width:123px;height:0.6px;background:#e6e6e6;"></div>
<svg style="left:4.5px;top:186.6px" width="6" height="6"><path d="M2.6 0L5.2 2.6L2.6 5.2L0 2.6z" fill="#e0602c"/><circle cx="2.6" cy="2.6" r="0.9" fill="#f8b090"/></svg>
<div class="t" style="left:12.60px;top:185.87px;font-size:7px;color:#383838;transform:scaleX(0.7600);transform-origin:0 0;font-family:'Liberation Sans',sans-serif;">USDCAD</div>
<div class="t" style="left:63.00px;top:185.87px;font-size:7px;color:#c44848;transform:scaleX(0.7800);transform-origin:100% 0;font-family:'Liberation Sans',sans-serif;">1.37332</div>
<div class="t" style="left:97.70px;top:185.87px;font-size:7px;color:#c44848;transform:scaleX(0.7800);transform-origin:100% 0;font-family:'Liberation Sans',sans-serif;">1.37348</div>
<div class="a" style="left:2px;top:194.2px;width:123px;height:10px;background:#eff9f9;"></div>
<div class="a" style="left:54.5px;top:194.2px;width:0.7px;height:10px;background:#e4e4e4;"></div>
<div class="a" style="left:89.5px;top:194.2px;width:0.7px;height:10px;background:#e4e4e4;"></div>
<div class="a" style="left:2px;top:203.6px;width:123px;height:0.6px;background:#e6e6e6;"></div>
<svg style="left:4.5px;top:196.6px" width="6" height="6"><path d="M2.6 0L5.2 2.6L2.6 5.2L0 2.6z" fill="#e0602c"/><circle cx="2.6" cy="2.6" r="0.9" fill="#f8b090"/></svg>
<div class="t" style="left:12.60px;top:195.87px;font-size:7px;color:#383838;transform:scaleX(0.7600);transform-origin:0 0;font-family:'Liberation Sans',sans-serif;">USDCHF</div>
<div class="t" style="left:63.00px;top:195.87px;font-size:7px;color:#c44848;transform:scaleX(0.7800);transform-origin:100% 0;font-family:'Liberation Sans',sans-serif;">0.80514</div>
<div class="t" style="left:97.70px;top:195.87px;font-size:7px;color:#c44848;transform:scaleX(0.7800);transform-origin:100% 0;font-family:'Liberation Sans',sans-serif;">0.80533</div>
<div class="a" style="left:2px;top:204.2px;width:123px;height:10px;background:#eff9f9;"></div>
<div class="a" style="left:54.5px;top:204.2px;width:0.7px;height:10px;background:#e4e4e4;"></div>
<div class="a" style="left:89.5px;top:204.2px;width:0.7px;height:10px;background:#e4e4e4;"></div>
<div class="a" style="left:2px;top:213.6px;width:123px;height:0.6px;background:#e6e6e6;"></div>
<svg style="left:4.5px;top:206.6px" width="6" height="6"><path d="M2.6 0L5.2 2.6L2.6 5.2L0 2.6z" fill="#30a83a"/><circle cx="2.6" cy="2.6" r="1" fill="#a0e0a0"/></svg>
<div class="t" style="left:12.60px;top:205.87px;font-size:7px;color:#383838;transform:scaleX(0.7600);transform-origin:0 0;font-family:'Liberation Sans',sans-serif;">USDHKD</div>
<div class="t" style="left:63.00px;top:205.87px;font-size:7px;color:#4848b4;transform:scaleX(0.7800);transform-origin:100% 0;font-family:'Liberation Sans',sans-serif;">7.84936</div>
<div class="t" style="left:97.70px;top:205.87px;font-size:7px;color:#4848b4;transform:scaleX(0.7800);transform-origin:100% 0;font-family:'Liberation Sans',sans-serif;">7.85065</div>
<div class="a" style="left:2px;top:214.2px;width:123px;height:10px;background:#fdf2f2;"></div>
<div class="a" style="left:54.5px;top:214.2px;width:0.7px;height:10px;background:#e4e4e4;"></div>
<div class="a" style="left:89.5px;top:214.2px;width:0.7px;height:10px;background:#e4e4e4;"></div>
<div class="a" style="left:2px;top:223.6px;width:123px;height:0.6px;background:#e6e6e6;"></div>
<svg style="left:4.5px;top:216.6px" width="6" height="6"><path d="M2.6 0L5.2 2.6L2.6 5.2L0 2.6z" fill="#e0602c"/><circle cx="2.6" cy="2.6" r="0.9" fill="#f8b090"/></svg>
<div class="t" style="left:12.60px;top:215.87px;font-size:7px;color:#383838;transform:scaleX(0.7600);transform-origin:0 0;font-family:'Liberation Sans',sans-serif;">AUDCAD</div>
<div class="t" style="left:63.00px;top:215.87px;font-size:7px;color:#c44848;transform:scaleX(0.7800);transform-origin:100% 0;font-family:'Liberation Sans',sans-serif;">0.89212</div>
<div class="t" style="left:97.70px;top:215.87px;font-size:7px;color:#c44848;transform:scaleX(0.7800);transform-origin:100% 0;font-family:'Liberation Sans',sans-serif;">0.89234</div>
<div class="a" style="left:2px;top:224.2px;width:123px;height:8.300000000000011px;background:#fdf2f2;"></div>
<div class="a" style="left:54.5px;top:224.2px;width:0.7px;height:8.300000000000011px;background:#e4e4e4;"></div>
<div class="a" style="left:89.5px;top:224.2px;width:0.7px;height:8.300000000000011px;background:#e4e4e4;"></div>
<svg style="left:4.5px;top:226.6px" width="6" height="6"><path d="M2.6 0L5.2 2.6L2.6 5.2L0 2.6z" fill="#e0602c"/></svg>
<div class="a" style="left:0;top:224.2px;width:125px;height:8.3px;overflow:hidden">
<div class="t" style="left:12.60px;top:1.67px;font-size:7px;color:#383838;transform:scaleX(0.7600);transform-origin:0 0;font-family:'Liberation Sans',sans-serif;">AUDCHF</div>
<div class="t" style="left:63.00px;top:1.67px;font-size:7px;color:#c44848;transform:scaleX(0.7800);transform-origin:100% 0;font-family:'Liberation Sans',sans-serif;">0.52305</div>
<div class="t" style="left:97.70px;top:1.67px;font-size:7px;color:#c44848;transform:scaleX(0.7800);transform-origin:100% 0;font-family:'Liberation Sans',sans-serif;">0.52326</div>
</div>
<div class="a" style="left:1px;top:232.5px;width:133px;height:10.5px;background:#f0f0f0;"></div>
<div class="a" style="left:1px;top:232.5px;width:133px;height:0.8px;background:#a0a0a0;"></div>
<div class="a" style="left:3.5px;top:232.5px;width:33px;height:9.5px;background:#ffffff;border:0.8px solid #808080;border-top:none;box-shadow:0.6px 0.6px 0 #606060"></div>
<div class="t" style="left:8.50px;top:234.37px;font-size:7px;color:#303030;transform:scaleX(0.7800);transform-origin:0 0;font-family:'Liberation Sans',sans-serif;">Symbols</div>
<div class="t" style="left:41.00px;top:234.37px;font-size:7px;color:#a8a8a8;transform:scaleX(0.7800);transform-origin:0 0;font-family:'Liberation Sans',sans-serif;">Tick Chart</div>
<div class="a" style="left:72px;top:234.5px;width:0.8px;height:6.5px;background:#909090;"></div>
<div class="a" style="left:134px;top:54px;width:1.2px;height:315px;background:#f0f0f0;"></div>
<div class="a" style="left:1px;top:243.5px;width:133px;height:125px;background:#ffffff;"></div>
<div class="a" style="left:1px;top:245.5px;width:125px;height:8px;background:#d5e3f1;"></div>
<div class="a" style="left:126px;top:245.5px;width:8px;height:8px;background:#eef2f6;"></div>
<div class="t" style="left:3.00px;top:245.84px;font-size:6.8px;color:#303a48;transform:scaleX(0.8000);transform-origin:0 0;font-family:'Liberation Sans',sans-serif;">Navigator</div>
<svg style="left:128px;top:248px" width="5" height="5"><path d="M0.5 0.5L3.5 3.5M3.5 0.5L0.5 3.5" stroke="#333" stroke-width="0.9"/></svg>
<div class="a" style="left:9.2px;top:253.5px;width:0.8px;height:66px;background:#cfcfcf;"></div>
<div class="a" style="left:9.2px;top:325px;width:0.8px;height:34px;background:#cfcfcf;"></div>
<div class="a" style="left:19.6px;top:253.5px;width:0.8px;height:59px;background:#cfcfcf;"></div>
<div class="a" style="left:19.6px;top:326px;width:0.8px;height:33px;background:#cfcfcf;"></div>
<div class="a" style="left:19.6px;top:258.1px;width:5.5px;height:0.7px;background:#cfcfcf;"></div>
<svg style="left:26px;top:254.5px" width="8" height="8"><rect x="0.3" y="0.3" width="7.2" height="7.2" rx="1.2" fill="#f6d860" stroke="#c8a030" stroke-width="0.5"/><path d="M3 6.2c1.2 0 1-2 1.3-3.4c0.3-1 0.8-1.1 1.5-1.1M2.8 3.6h2.4" fill="none" stroke="#604810" stroke-width="0.7"/></svg>
<div class="t" style="left:37.00px;top:254.97px;font-size:7px;color:#303030;transform:scaleX(0.7700);transform-origin:0 0;font-family:'Liberation Sans',sans-serif;">MACD</div>
<div class="a" style="left:19.6px;top:267.1px;width:5.5px;height:0.7px;background:#cfcfcf;"></div>
<svg style="left:26px;top:263.5px" width="8" height="8"><rect x="0.3" y="0.3" width="7.2" height="7.2" rx="1.2" fill="#f6d860" stroke="#c8a030" stroke-width="0.5"/><path d="M3 6.2c1.2 0 1-2 1.3-3.4c0.3-1 0.8-1.1 1.5-1.1M2.8 3.6h2.4" fill="none" stroke="#604810" stroke-width="0.7"/></svg>
<div class="t" style="left:37.00px;top:263.97px;font-size:7px;color:#303030;transform:scaleX(0.7700);transform-origin:0 0;font-family:'Liberation Sans',sans-serif;">Momentum</div>
<div class="a" style="left:19.6px;top:276.1px;width:5.5px;height:0.7px;background:#cfcfcf;"></div>
<svg style="left:26px;top:272.5px" width="8" height="8"><rect x="0.3" y="0.3" width="7.2" height="7.2" rx="1.2" fill="#f6d860" stroke="#c8a030" stroke-width="0.5"/><path d="M3 6.2c1.2 0 1-2 1.3-3.4c0.3-1 0.8-1.1 1.5-1.1M2.8 3.6h2.4" fill="none" stroke="#604810" stroke-width="0.7"/></svg>
<div class="t" style="left:37.00px;top:272.97px;font-size:7px;color:#303030;transform:scaleX(0.7700);transform-origin:0 0;font-family:'Liberation Sans',sans-serif;">OsMA</div>
<div class="a" style="left:19.6px;top:285.1px;width:5.5px;height:0.7px;background:#cfcfcf;"></div>
<svg style="left:26px;top:281.5px" width="8" height="8"><rect x="0.3" y="0.3" width="7.2" height="7.2" rx="1.2" fill="#f6d860" stroke="#c8a030" stroke-width="0.5"/><path d="M3 6.2c1.2 0 1-2 1.3-3.4c0.3-1 0.8-1.1 1.5-1.1M2.8 3.6h2.4" fill="none" stroke="#604810" stroke-width="0.7"/></svg>
<div class="t" style="left:37.00px;top:281.97px;font-size:7px;color:#303030;transform:scaleX(0.7700);transform-origin:0 0;font-family:'Liberation Sans',sans-serif;">Parabolic</div>
<div class="a" style="left:19.6px;top:294.1px;width:5.5px;height:0.7px;background:#cfcfcf;"></div>
<svg style="left:26px;top:290.5px" width="8" height="8"><rect x="0.3" y="0.3" width="7.2" height="7.2" rx="1.2" fill="#f6d860" stroke="#c8a030" stroke-width="0.5"/><path d="M3 6.2c1.2 0 1-2 1.3-3.4c0.3-1 0.8-1.1 1.5-1.1M2.8 3.6h2.4" fill="none" stroke="#604810" stroke-width="0.7"/></svg>
<div class="t" style="left:37.00px;top:290.97px;font-size:7px;color:#303030;transform:scaleX(0.7700);transform-origin:0 0;font-family:'Liberation Sans',sans-serif;">RSI</div>
<div class="a" style="left:19.6px;top:303.1px;width:5.5px;height:0.7px;background:#cfcfcf;"></div>
<svg style="left:26px;top:299.5px" width="8" height="8"><rect x="0.3" y="0.3" width="7.2" height="7.2" rx="1.2" fill="#f6d860" stroke="#c8a030" stroke-width="0.5"/><path d="M3 6.2c1.2 0 1-2 1.3-3.4c0.3-1 0.8-1.1 1.5-1.1M2.8 3.6h2.4" fill="none" stroke="#604810" stroke-width="0.7"/></svg>
<div class="t" style="left:37.00px;top:299.97px;font-size:7px;color:#303030;transform:scaleX(0.7700);transform-origin:0 0;font-family:'Liberation Sans',sans-serif;">Stochastic</div>
<div class="a" style="left:19.6px;top:312.1px;width:5.5px;height:0.7px;background:#cfcfcf;"></div>
<svg style="left:26px;top:308.5px" width="8" height="8"><rect x="0.3" y="0.3" width="7.2" height="7.2" rx="1.2" fill="#f6d860" stroke="#c8a030" stroke-width="0.5"/><path d="M3 6.2c1.2 0 1-2 1.3-3.4c0.3-1 0.8-1.1 1.5-1.1M2.8 3.6h2.4" fill="none" stroke="#604810" stroke-width="0.7"/></svg>
<div class="t" style="left:37.00px;top:308.97px;font-size:7px;color:#303030;transform:scaleX(0.7700);transform-origin:0 0;font-family:'Liberation Sans',sans-serif;">ZigZag</div>
<div class="a" style="left:7px;top:319.6px;width:4.6px;height:4.8px;background:#f8f8f8;border:0.6px solid #a8b0c0"></div>
<div class="a" style="left:8.1px;top:321.8px;width:2.4px;height:0.6px;background:#505a70;"></div>
<div class="a" style="left:11.6px;top:321.1px;width:3px;height:0.7px;background:#cfcfcf;"></div>
<svg style="left:15.3px;top:317.1px" width="10" height="9"><path d="M0.5 4.2C1.5 1.2 7.5 1.2 8.5 4.2C7 5.6 2 5.6 0.5 4.2z" fill="#3a9ad8" stroke="#2a6aa0" stroke-width="0.4"/><path d="M2.5 2.6C3.5 1.8 5.5 1.8 6.5 2.6" fill="none" stroke="#a8e0f8" stroke-width="0.6"/><path d="M3 5.5L5.5 7.2L7.5 6.4L6.8 5" fill="#e8d060" stroke="#a09030" stroke-width="0.4"/><circle cx="6.8" cy="7" r="1" fill="#d8b040"/></svg>
<div class="t" style="left:26.80px;top:317.97px;font-size:7px;color:#303030;transform:scaleX(0.7700);transform-origin:0 0;font-family:'Liberation Sans',sans-serif;">Expert Advisors</div>
<div class="a" style="left:19.6px;top:330.1px;width:5.5px;height:0.7px;background:#cfcfcf;"></div>
<svg style="left:25.8px;top:326.1px" width="10" height="9"><path d="M0.5 4.2C1.5 1.2 7.5 1.2 8.5 4.2C7 5.6 2 5.6 0.5 4.2z" fill="#3a9ad8" stroke="#2a6aa0" stroke-width="0.4"/><path d="M2.5 2.6C3.5 1.8 5.5 1.8 6.5 2.6" fill="none" stroke="#a8e0f8" stroke-width="0.6"/><path d="M3 5.5L5.5 7.2L7.5 6.4L6.8 5" fill="#e8d060" stroke="#a09030" stroke-width="0.4"/><circle cx="6.8" cy="7" r="1" fill="#d8b040"/></svg>
<div class="t" style="left:37.00px;top:326.97px;font-size:7px;color:#303030;transform:scaleX(0.7700);transform-origin:0 0;font-family:'Liberation Sans',sans-serif;">ai easy</div>
<div class="a" style="left:19.6px;top:339.1px;width:5.5px;height:0.7px;background:#cfcfcf;"></div>
<svg style="left:25.8px;top:335.1px" width="10" height="9"><path d="M0.5 4.2C1.5 1.2 7.5 1.2 8.5 4.2C7 5.6 2 5.6 0.5 4.2z" fill="#3a9ad8" stroke="#2a6aa0" stroke-width="0.4"/><path d="M2.5 2.6C3.5 1.8 5.5 1.8 6.5 2.6" fill="none" stroke="#a8e0f8" stroke-width="0.6"/><path d="M3 5.5L5.5 7.2L7.5 6.4L6.8 5" fill="#e8d060" stroke="#a09030" stroke-width="0.4"/><circle cx="6.8" cy="7" r="1" fill="#d8b040"/></svg>
<div class="t" style="left:37.00px;top:335.97px;font-size:7px;color:#303030;transform:scaleX(0.7700);transform-origin:0 0;font-family:'Liberation Sans',sans-serif;">ai easy dashboard</div>
<div class="a" style="left:19.6px;top:348.1px;width:5.5px;height:0.7px;background:#cfcfcf;"></div>
<svg style="left:25.8px;top:344.1px" width="10" height="9"><path d="M0.5 4.2C1.5 1.2 7.5 1.2 8.5 4.2C7 5.6 2 5.6 0.5 4.2z" fill="#3a9ad8" stroke="#2a6aa0" stroke-width="0.4"/><path d="M2.5 2.6C3.5 1.8 5.5 1.8 6.5 2.6" fill="none" stroke="#a8e0f8" stroke-width="0.6"/><path d="M3 5.5L5.5 7.2L7.5 6.4L6.8 5" fill="#e8d060" stroke="#a09030" stroke-width="0.4"/><circle cx="6.8" cy="7" r="1" fill="#d8b040"/></svg>
<div class="t" style="left:37.00px;top:344.97px;font-size:7px;color:#303030;transform:scaleX(0.7700);transform-origin:0 0;font-family:'Liberation Sans',sans-serif;">AutoHedge</div>
<div class="a" style="left:19.6px;top:357.1px;width:5.5px;height:0.7px;background:#cfcfcf;"></div>
<svg style="left:25.8px;top:353.1px" width="10" height="9"><path d="M0.5 4.2C1.5 1.2 7.5 1.2 8.5 4.2C7 5.6 2 5.6 0.5 4.2z" fill="#3a9ad8" stroke="#2a6aa0" stroke-width="0.4"/><path d="M2.5 2.6C3.5 1.8 5.5 1.8 6.5 2.6" fill="none" stroke="#a8e0f8" stroke-width="0.6"/><path d="M3 5.5L5.5 7.2L7.5 6.4L6.8 5" fill="#e8d060" stroke="#a09030" stroke-width="0.4"/><circle cx="6.8" cy="7" r="1" fill="#d8b040"/></svg>
<div class="a" style="left:0;top:352px;width:125px;height:7px;overflow:hidden">
<div class="t" style="left:37.00px;top:1.97px;font-size:7px;color:#303030;transform:scaleX(0.7700);transform-origin:0 0;font-family:'Liberation Sans',sans-serif;">AutoHedgePro_v2</div>
</div>
<div class="a" style="left:125px;top:252.8px;width:8.5px;height:106px;background:#f0f0f0;"></div>
<div class="a" style="left:125.5px;top:309px;width:7.5px;height:18.5px;background:#cdcdcd;"></div>
<svg style="left:126.5px;top:256px" width="6" height="5"><path d="M0.5 3.5L3 1l2.5 2.5" fill="none" stroke="#555" stroke-width="0.9"/></svg>
<svg style="left:126.5px;top:352.5px" width="6" height="5"><path d="M0.5 1L3 3.5L5.5 1" fill="none" stroke="#555" stroke-width="0.9"/></svg>
<div class="a" style="left:1px;top:359px;width:133px;height:10.5px;background:#f0f0f0;"></div>
<div class="a" style="left:1px;top:359px;width:133px;height:0.8px;background:#a0a0a0;"></div>
<div class="a" style="left:3.5px;top:359px;width:35px;height:9.5px;background:#ffffff;border:0.8px solid #808080;border-top:none;box-shadow:0.6px 0.6px 0 #606060"></div>
<div class="t" style="left:8.50px;top:360.87px;font-size:7px;color:#303030;transform:scaleX(0.7800);transform-origin:0 0;font-family:'Liberation Sans',sans-serif;">Common</div>
<div class="t" style="left:44.00px;top:360.87px;font-size:7px;color:#a8a8a8;transform:scaleX(0.7800);transform-origin:0 0;font-family:'Liberation Sans',sans-serif;">Favorites</div>
<div class="a" style="left:72px;top:361px;width:0.8px;height:6.5px;background:#909090;"></div>
<div class="a" style="left:135.5px;top:54px;width:821.5px;height:307px;background:#000000;"></div>
<div class="a" style="left:137.1px;top:55.4px;width:797.6999999999999px;height:0.9px;background:#8c8c8c;"></div>
<div class="a" style="left:137.1px;top:55.4px;width:0.9px;height:295.90000000000003px;background:#8c8c8c;"></div>
<div class="a" style="left:934.3px;top:55.4px;width:0.9px;height:296.40000000000003px;background:#8c8c8c;"></div>
<div class="a" style="left:137.1px;top:350.8px;width:797.6999999999999px;height:0.9px;background:#8c8c8c;"></div>
<div class="a" style="left:137.1px;top:323.4px;width:797.6999999999999px;height:0.8px;background:#9a9a9a;"></div>
<svg style="left:0;top:0" width="960" height="540"><path d="M137.80 122V132" stroke="#2fa82f" stroke-width="0.8"/><rect x="136.50" y="124.4" width="2.6" height="6.60" fill="#d8ffd0" stroke="#45c845" stroke-width="0.7"/><path d="M141.60 129V139" stroke="#2fa82f" stroke-width="0.8"/><rect x="140.30" y="131" width="2.6" height="3.60" fill="#d8ffd0" stroke="#45c845" stroke-width="0.7"/><path d="M145.70 129V138" stroke="#2fa82f" stroke-width="0.8"/><rect x="144.40" y="130.5" width="2.6" height="5.10" fill="#000" stroke="#35c035" stroke-width="0.8"/><path d="M149.50 118V134" stroke="#2fa82f" stroke-width="0.8"/><rect x="148.20" y="119.3" width="2.6" height="13.70" fill="#000" stroke="#35c035" stroke-width="0.8"/><path d="M153.50 114V122" stroke="#2fa82f" stroke-width="0.8"/><rect x="152.20" y="116.8" width="2.6" height="3.10" fill="#000" stroke="#35c035" stroke-width="0.8"/><path d="M157.40 109.7V123" stroke="#2fa82f" stroke-width="0.8"/><rect x="156.10" y="117.3" width="2.6" height="5.10" fill="#d8ffd0" stroke="#45c845" stroke-width="0.7"/><path d="M161.50 118V127" stroke="#2fa82f" stroke-width="0.8"/><rect x="160.20" y="122.4" width="2.6" height="2.00" fill="#d8ffd0" stroke="#45c845" stroke-width="0.7"/><path d="M165.50 118V135" stroke="#2fa82f" stroke-width="0.8"/><rect x="164.20" y="121.9" width="2.6" height="11.70" fill="#d8ffd0" stroke="#45c845" stroke-width="0.7"/><path d="M169.60 130V145" stroke="#2fa82f" stroke-width="0.8"/><rect x="168.30" y="132.6" width="2.6" height="5.60" fill="#d8ffd0" stroke="#45c845" stroke-width="0.7"/><path d="M173.70 134V152" stroke="#2fa82f" stroke-width="0.8"/><rect x="172.40" y="137.7" width="2.6" height="11.20" fill="#d8ffd0" stroke="#45c845" stroke-width="0.7"/><path d="M177.50 134V150" stroke="#2fa82f" stroke-width="0.8"/><rect x="176.20" y="136.7" width="2.6" height="12.20" fill="#000" stroke="#35c035" stroke-width="0.8"/><path d="M181.80 125V139" stroke="#2fa82f" stroke-width="0.8"/><rect x="180.50" y="127" width="2.6" height="10.20" fill="#000" stroke="#35c035" stroke-width="0.8"/><path d="M185.70 106V129" stroke="#2fa82f" stroke-width="0.8"/><rect x="184.40" y="108" width="2.6" height="20.00" fill="#000" stroke="#35c035" stroke-width="0.8"/><path d="M189.50 106V113" stroke="#2fa82f" stroke-width="0.8"/><rect x="188.20" y="108.7" width="2.6" height="3.00" fill="#d8ffd0" stroke="#45c845" stroke-width="0.7"/><path d="M193.50 94V130" stroke="#2fa82f" stroke-width="0.8"/><rect x="192.20" y="102" width="2.6" height="9.70" fill="#000" stroke="#35c035" stroke-width="0.8"/><path d="M197.60 104V121" stroke="#2fa82f" stroke-width="0.8"/><rect x="196.30" y="106.9" width="2.6" height="12.30" fill="#d8ffd0" stroke="#45c845" stroke-width="0.7"/><path d="M201.60 112V122" stroke="#2fa82f" stroke-width="0.8"/><rect x="200.30" y="114.7" width="2.6" height="6.00" fill="#000" stroke="#35c035" stroke-width="0.8"/><path d="M205.60 104V118" stroke="#2fa82f" stroke-width="0.8"/><rect x="204.30" y="106" width="2.6" height="9.30" fill="#000" stroke="#35c035" stroke-width="0.8"/><path d="M209.60 86.7V112" stroke="#2fa82f" stroke-width="0.8"/><rect x="208.30" y="100" width="2.6" height="12.00" fill="#d8ffd0" stroke="#45c845" stroke-width="0.7"/><path d="M213.60 107V127" stroke="#2fa82f" stroke-width="0.8"/><rect x="212.30" y="112" width="2.6" height="13.30" fill="#d8ffd0" stroke="#45c845" stroke-width="0.7"/><path d="M217.60 104V126" stroke="#2fa82f" stroke-width="0.8"/><rect x="216.30" y="106" width="2.6" height="19.30" fill="#000" stroke="#35c035" stroke-width="0.8"/><path d="M221.60 103V113" stroke="#2fa82f" stroke-width="0.8"/><rect x="220.30" y="106" width="2.6" height="5.30" fill="#d8ffd0" stroke="#45c845" stroke-width="0.7"/><path d="M225.60 94V112" stroke="#2fa82f" stroke-width="0.8"/><rect x="224.30" y="96" width="2.6" height="15.30" fill="#000" stroke="#35c035" stroke-width="0.8"/><path d="M229.60 88.7V103" stroke="#2fa82f" stroke-width="0.8"/><rect x="228.30" y="96" width="2.6" height="4.00" fill="#d8ffd0" stroke="#45c845" stroke-width="0.7"/><path d="M233.60 92V104" stroke="#2fa82f" stroke-width="0.8"/><path d="M232.10 98h3" stroke="#3cc83c" stroke-width="0.9"/><path d="M237.60 88V104" stroke="#2fa82f" stroke-width="0.8"/><rect x="236.30" y="92" width="2.6" height="8.00" fill="#000" stroke="#35c035" stroke-width="0.8"/><path d="M241.60 88V96" stroke="#2fa82f" stroke-width="0.8"/><rect x="240.30" y="92" width="2.6" height="2.00" fill="#d8ffd0" stroke="#45c845" stroke-width="0.7"/><path d="M245.60 70V95" stroke="#2fa82f" stroke-width="0.8"/><rect x="244.30" y="71.3" width="2.6" height="22.70" fill="#000" stroke="#35c035" stroke-width="0.8"/><path d="M249.60 70V80" stroke="#2fa82f" stroke-width="0.8"/><rect x="248.30" y="71.3" width="2.6" height="6.70" fill="#d8ffd0" stroke="#45c845" stroke-width="0.7"/><path d="M253.60 73V86" stroke="#2fa82f" stroke-width="0.8"/><rect x="252.30" y="78" width="2.6" height="6.00" fill="#d8ffd0" stroke="#45c845" stroke-width="0.7"/><path d="M257.60 82V95" stroke="#2fa82f" stroke-width="0.8"/><rect x="256.30" y="84" width="2.6" height="8.70" fill="#d8ffd0" stroke="#45c845" stroke-width="0.7"/><path d="M261.60 89V98" stroke="#2fa82f" stroke-width="0.8"/><rect x="260.30" y="92.7" width="2.6" height="2.00" fill="#d8ffd0" stroke="#45c845" stroke-width="0.7"/><path d="M265.60 91V105" stroke="#2fa82f" stroke-width="0.8"/><rect x="264.30" y="95" width="2.6" height="1.70" fill="#d8ffd0" stroke="#45c845" stroke-width="0.7"/><path d="M269.60 87V99" stroke="#2fa82f" stroke-width="0.8"/><rect x="268.30" y="89.3" width="2.6" height="7.40" fill="#000" stroke="#35c035" stroke-width="0.8"/><path d="M585.30 219V229" stroke="#2fa82f" stroke-width="0.8"/><rect x="584.00" y="221.3" width="2.6" height="5.70" fill="#000" stroke="#35c035" stroke-width="0.8"/><path d="M589.50 217V224" stroke="#2fa82f" stroke-width="0.8"/><rect x="588.20" y="218.75" width="2.6" height="2.50" fill="#000" stroke="#35c035" stroke-width="0.8"/><path d="M593.70 218V225" stroke="#2fa82f" stroke-width="0.8"/><rect x="592.40" y="219.6" width="2.6" height="4.60" fill="#d8ffd0" stroke="#45c845" stroke-width="0.7"/><path d="M597.40 217V226" stroke="#2fa82f" stroke-width="0.8"/><rect x="596.10" y="219" width="2.6" height="5.20" fill="#000" stroke="#35c035" stroke-width="0.8"/><path d="M601.60 211V221" stroke="#2fa82f" stroke-width="0.8"/><rect x="600.30" y="213.75" width="2.6" height="6.25" fill="#000" stroke="#35c035" stroke-width="0.8"/><path d="M605.60 209V218" stroke="#2fa82f" stroke-width="0.8"/><rect x="604.30" y="212" width="2.6" height="2.20" fill="#000" stroke="#35c035" stroke-width="0.8"/><path d="M609.30 208V215" stroke="#2fa82f" stroke-width="0.8"/><path d="M607.80 211.7h3" stroke="#3cc83c" stroke-width="0.9"/><path d="M613.50 205V213" stroke="#2fa82f" stroke-width="0.8"/><rect x="612.20" y="207.5" width="2.6" height="4.50" fill="#000" stroke="#35c035" stroke-width="0.8"/><path d="M617.70 206V214" stroke="#2fa82f" stroke-width="0.8"/><rect x="616.40" y="207" width="2.6" height="6.00" fill="#d8ffd0" stroke="#45c845" stroke-width="0.7"/><path d="M621.60 211V215" stroke="#2fa82f" stroke-width="0.8"/><rect x="620.30" y="212.5" width="2.6" height="1.70" fill="#d8ffd0" stroke="#45c845" stroke-width="0.7"/><path d="M625.30 212V216" stroke="#2fa82f" stroke-width="0.8"/><rect x="624.00" y="213" width="2.6" height="2.00" fill="#d8ffd0" stroke="#45c845" stroke-width="0.7"/><path d="M629.50 213V217" stroke="#2fa82f" stroke-width="0.8"/><rect x="628.20" y="214" width="2.6" height="2.00" fill="#d8ffd0" stroke="#45c845" stroke-width="0.7"/><path d="M633.50 212V218" stroke="#2fa82f" stroke-width="0.8"/><rect x="632.20" y="213.75" width="2.6" height="3.75" fill="#d8ffd0" stroke="#45c845" stroke-width="0.7"/><path d="M637.40 215V221" stroke="#2fa82f" stroke-width="0.8"/><rect x="636.10" y="216.7" width="2.6" height="3.70" fill="#d8ffd0" stroke="#45c845" stroke-width="0.7"/><path d="M641.30 219V228" stroke="#2fa82f" stroke-width="0.8"/><rect x="640.00" y="220" width="2.6" height="7.50" fill="#d8ffd0" stroke="#45c845" stroke-width="0.7"/><path d="M645.50 219V230" stroke="#2fa82f" stroke-width="0.8"/><rect x="644.20" y="223.3" width="2.6" height="4.70" fill="#000" stroke="#35c035" stroke-width="0.8"/><path d="M649.70 217V225" stroke="#2fa82f" stroke-width="0.8"/><rect x="648.40" y="218" width="2.6" height="5.75" fill="#000" stroke="#35c035" stroke-width="0.8"/><path d="M653.40 216V222" stroke="#2fa82f" stroke-width="0.8"/><path d="M651.90 218.3h3" stroke="#3cc83c" stroke-width="0.9"/><path d="M657.60 215V222" stroke="#2fa82f" stroke-width="0.8"/><path d="M656.10 218h3" stroke="#3cc83c" stroke-width="0.9"/><path d="M661.60 214V222" stroke="#2fa82f" stroke-width="0.8"/><rect x="660.30" y="219" width="2.6" height="2.70" fill="#d8ffd0" stroke="#45c845" stroke-width="0.7"/><path d="M665.50 218V227" stroke="#2fa82f" stroke-width="0.8"/><path d="M664.00 221.25h3" stroke="#3cc83c" stroke-width="0.9"/><path d="M669.50 220V227" stroke="#2fa82f" stroke-width="0.8"/><rect x="668.20" y="221.25" width="2.6" height="4.55" fill="#d8ffd0" stroke="#45c845" stroke-width="0.7"/><path d="M673.40 218V229" stroke="#2fa82f" stroke-width="0.8"/><rect x="672.10" y="221.7" width="2.6" height="4.10" fill="#000" stroke="#35c035" stroke-width="0.8"/><path d="M677.60 220V224" stroke="#2fa82f" stroke-width="0.8"/><path d="M676.10 221.7h3" stroke="#3cc83c" stroke-width="0.9"/><path d="M681.30 221V226" stroke="#2fa82f" stroke-width="0.8"/><rect x="680.00" y="222.5" width="2.6" height="2.50" fill="#d8ffd0" stroke="#45c845" stroke-width="0.7"/><path d="M685.50 221V235.8" stroke="#2fa82f" stroke-width="0.8"/><rect x="684.20" y="222.5" width="2.6" height="2.10" fill="#000" stroke="#35c035" stroke-width="0.8"/><path d="M689.50 212V229" stroke="#2fa82f" stroke-width="0.8"/><rect x="688.20" y="219.6" width="2.6" height="4.15" fill="#000" stroke="#35c035" stroke-width="0.8"/><path d="M693.40 211V223" stroke="#2fa82f" stroke-width="0.8"/><rect x="692.10" y="219" width="2.6" height="1.40" fill="#d8ffd0" stroke="#45c845" stroke-width="0.7"/><path d="M697.50 220V246" stroke="#2fa82f" stroke-width="0.8"/><rect x="696.20" y="220.8" width="2.6" height="24.20" fill="#d8ffd0" stroke="#45c845" stroke-width="0.7"/><path d="M701.70 236.7V256" stroke="#2fa82f" stroke-width="0.8"/><rect x="700.40" y="245" width="2.6" height="10.00" fill="#d8ffd0" stroke="#45c845" stroke-width="0.7"/><path d="M705.70 247V270" stroke="#2fa82f" stroke-width="0.8"/><rect x="704.40" y="255" width="2.6" height="9.20" fill="#d8ffd0" stroke="#45c845" stroke-width="0.7"/><path d="M709.50 259V275" stroke="#2fa82f" stroke-width="0.8"/><rect x="708.20" y="264" width="2.6" height="4.30" fill="#d8ffd0" stroke="#45c845" stroke-width="0.7"/><path d="M713.70 258V302.5" stroke="#2fa82f" stroke-width="0.8"/><rect x="712.40" y="268.3" width="2.6" height="27.20" fill="#d8ffd0" stroke="#45c845" stroke-width="0.7"/><path d="M717.60 290V341" stroke="#2fa82f" stroke-width="0.8"/><rect x="716.30" y="295.8" width="2.6" height="13.90" fill="#d8ffd0" stroke="#45c845" stroke-width="0.7"/><path d="M721.60 295V312" stroke="#2fa82f" stroke-width="0.8"/><rect x="720.30" y="300" width="2.6" height="9.70" fill="#000" stroke="#35c035" stroke-width="0.8"/><path d="M725.70 297V333" stroke="#2fa82f" stroke-width="0.8"/><rect x="724.40" y="301.2" width="2.6" height="19.30" fill="#d8ffd0" stroke="#45c845" stroke-width="0.7"/><path d="M729.70 310V326" stroke="#2fa82f" stroke-width="0.8"/><rect x="728.40" y="315" width="2.6" height="6.00" fill="#000" stroke="#35c035" stroke-width="0.8"/><path d="M733.50 305V323" stroke="#2fa82f" stroke-width="0.8"/><rect x="732.20" y="310.9" width="2.6" height="4.80" fill="#000" stroke="#35c035" stroke-width="0.8"/><path d="M737.50 296V318" stroke="#2fa82f" stroke-width="0.8"/><rect x="736.20" y="303.7" width="2.6" height="7.20" fill="#000" stroke="#35c035" stroke-width="0.8"/><path d="M741.70 302V319" stroke="#2fa82f" stroke-width="0.8"/><rect x="740.40" y="303.7" width="2.6" height="14.30" fill="#d8ffd0" stroke="#45c845" stroke-width="0.7"/><path d="M745.70 305V320" stroke="#2fa82f" stroke-width="0.8"/><rect x="744.40" y="306.7" width="2.6" height="12.00" fill="#000" stroke="#35c035" stroke-width="0.8"/><path d="M749.50 302V312" stroke="#2fa82f" stroke-width="0.8"/><path d="M748.00 307.3h3" stroke="#3cc83c" stroke-width="0.9"/><path d="M753.50 303V312" stroke="#2fa82f" stroke-width="0.8"/><rect x="752.20" y="306.7" width="2.6" height="3.60" fill="#d8ffd0" stroke="#45c845" stroke-width="0.7"/><path d="M757.30 301V313" stroke="#2fa82f" stroke-width="0.8"/><rect x="756.00" y="302.5" width="2.6" height="9.00" fill="#000" stroke="#35c035" stroke-width="0.8"/><path d="M761.80 302V337" stroke="#2fa82f" stroke-width="0.8"/><rect x="760.50" y="303" width="2.6" height="31.30" fill="#d8ffd0" stroke="#45c845" stroke-width="0.7"/><path d="M765.50 325V344" stroke="#2fa82f" stroke-width="0.8"/><rect x="764.20" y="327.7" width="2.6" height="6.60" fill="#000" stroke="#35c035" stroke-width="0.8"/><path d="M769.60 321V332" stroke="#2fa82f" stroke-width="0.8"/><rect x="768.30" y="323.5" width="2.6" height="5.50" fill="#000" stroke="#35c035" stroke-width="0.8"/><circle cx="211" cy="103" r="1.1" fill="#e070d0"/><circle cx="715.2" cy="295.6" r="1.2" fill="#e070d0"/></svg>
<svg style="left:771.5px;top:55.4px" width="5" height="3"><path d="M0 0h4.5l-2.25 2.5z" fill="#d0d0d0"/></svg>
<div class="t" style="left:139.00px;top:57.57px;font-size:5px;color:#d8d8d8;transform:scaleX(0.9362);transform-origin:0 0;font-family:'Liberation Sans',sans-serif;">XAUUSD,M5  2373.51 2374.69 2372.48 2374.46</div>
<div class="t" style="left:139.80px;top:63.96px;font-size:9.6px;color:#e2c458;transform:scaleX(0.9483);transform-origin:0 0;font-family:'Liberation Serif',serif;-webkit-text-stroke:0.2px #e2c458">GoldenFlow MT4</div>
<div class="t" style="left:140.00px;top:75.01px;font-size:6.6px;color:#a4a4a4;transform:scaleX(1.1014);transform-origin:0 0;font-family:'Liberation Sans',sans-serif;">TradeMode </div>
<div class="t" style="left:178.92px;top:75.01px;font-size:6.6px;color:#f4f4f4;transform:scaleX(1.1014);transform-origin:0 0;font-family:'Liberation Sans',sans-serif;-webkit-text-stroke:0.22px #f4f4f4">All</div>
<div class="t" style="left:140.00px;top:82.51px;font-size:6.6px;color:#a4a4a4;transform:scaleX(1.1211);transform-origin:0 0;font-family:'Liberation Sans',sans-serif;">TradeSystem </div>
<div class="t" style="left:185.78px;top:82.51px;font-size:6.6px;color:#f4f4f4;transform:scaleX(1.1211);transform-origin:0 0;font-family:'Liberation Sans',sans-serif;-webkit-text-stroke:0.22px #f4f4f4">Stop</div>
<div class="t" style="left:140.00px;top:90.01px;font-size:6.6px;color:#a4a4a4;transform:scaleX(1.0200);transform-origin:0 0;font-family:'Liberation Sans',sans-serif;">TPMode </div>
<div class="t" style="left:167.31px;top:90.01px;font-size:6.6px;color:#f4f4f4;transform:scaleX(1.0200);transform-origin:0 0;font-family:'Liberation Sans',sans-serif;-webkit-text-stroke:0.22px #f4f4f4">MONEY</div>
<div class="t" style="left:140.00px;top:97.51px;font-size:6.6px;color:#a4a4a4;transform:scaleX(0.9690);transform-origin:0 0;font-family:'Liberation Sans',sans-serif;">SLMODE </div>
<div class="t" style="left:168.79px;top:97.51px;font-size:6.6px;color:#f4f4f4;transform:scaleX(0.9690);transform-origin:0 0;font-family:'Liberation Sans',sans-serif;-webkit-text-stroke:0.22px #f4f4f4">CUTLOSS_MONEY</div>
<div class="t" style="left:140.00px;top:105.01px;font-size:6.6px;color:#a4a4a4;transform:scaleX(1.0762);transform-origin:0 0;font-family:'Liberation Sans',sans-serif;">System Mode </div>
<div class="t" style="left:185.40px;top:105.01px;font-size:6.6px;color:#f4f4f4;transform:scaleX(1.0762);transform-origin:0 0;font-family:'Liberation Sans',sans-serif;-webkit-text-stroke:0.22px #f4f4f4">AUTO</div>
<div class="t" style="left:140.00px;top:112.51px;font-size:6.6px;color:#a4a4a4;transform:scaleX(1.1920);transform-origin:0 0;font-family:'Liberation Sans',sans-serif;">Trade Count </div>
<div class="t" style="left:185.62px;top:112.51px;font-size:6.6px;color:#f4f4f4;transform:scaleX(1.1920);transform-origin:0 0;font-family:'Liberation Sans',sans-serif;-webkit-text-stroke:0.22px #f4f4f4">0</div>
<div class="t" style="left:140.00px;top:120.01px;font-size:6.6px;color:#a4a4a4;transform:scaleX(1.0831);transform-origin:0 0;font-family:'Liberation Sans',sans-serif;">Max Order </div>
<div class="t" style="left:175.75px;top:120.01px;font-size:6.6px;color:#f4f4f4;transform:scaleX(1.0831);transform-origin:0 0;font-family:'Liberation Sans',sans-serif;-webkit-text-stroke:0.22px #f4f4f4">20</div>
<div class="t" style="left:858.14px;top:63.26px;font-size:9.6px;color:#e2c458;transform:scaleX(0.9613);transform-origin:100% 0;font-family:'Liberation Serif',serif;-webkit-text-stroke:0.2px #e2c458">Comment Message</div>
<div class="t" style="left:828.00px;top:75.31px;font-size:6.6px;color:#f4f4f4;transform:scaleX(1.1014);transform-origin:0 0;font-family:'Liberation Sans',sans-serif;-webkit-text-stroke:0.22px #f4f4f4">2159.93214286</div>
<div class="t" style="left:878.53px;top:75.31px;font-size:6.6px;color:#a4a4a4;transform:scaleX(1.1014);transform-origin:0 0;font-family:'Liberation Sans',sans-serif;"> TP money Price</div>
<div class="t" style="left:885.50px;top:82.81px;font-size:6.6px;color:#f4f4f4;transform:scaleX(1.0833);transform-origin:0 0;font-family:'Liberation Sans',sans-serif;-webkit-text-stroke:0.22px #f4f4f4">0</div>
<div class="t" style="left:889.48px;top:82.81px;font-size:6.6px;color:#a4a4a4;transform:scaleX(1.0833);transform-origin:0 0;font-family:'Liberation Sans',sans-serif;"> TP PIP Price</div>
<div class="t" style="left:878.00px;top:90.31px;font-size:6.6px;color:#f4f4f4;transform:scaleX(1.0984);transform-origin:0 0;font-family:'Liberation Sans',sans-serif;-webkit-text-stroke:0.22px #f4f4f4">0</div>
<div class="t" style="left:882.03px;top:90.31px;font-size:6.6px;color:#a4a4a4;transform:scaleX(1.0984);transform-origin:0 0;font-family:'Liberation Sans',sans-serif;"> TP PIP Trailing</div>
<div class="t" style="left:886.00px;top:97.81px;font-size:6.6px;color:#f4f4f4;transform:scaleX(1.0809);transform-origin:0 0;font-family:'Liberation Sans',sans-serif;-webkit-text-stroke:0.22px #f4f4f4">0</div>
<div class="t" style="left:889.97px;top:97.81px;font-size:6.6px;color:#a4a4a4;transform:scaleX(1.0809);transform-origin:0 0;font-family:'Liberation Sans',sans-serif;"> SL PIP Price</div>
<div class="t" style="left:870.00px;top:105.31px;font-size:6.6px;color:#f4f4f4;transform:scaleX(1.0122);transform-origin:0 0;font-family:'Liberation Sans',sans-serif;-webkit-text-stroke:0.22px #f4f4f4">0</div>
<div class="t" style="left:873.72px;top:105.31px;font-size:6.6px;color:#a4a4a4;transform:scaleX(1.0122);transform-origin:0 0;font-family:'Liberation Sans',sans-serif;"> SL MONEY PRICE</div>
<div class="t" style="left:882.00px;top:112.81px;font-size:6.6px;color:#f4f4f4;transform:scaleX(1.0900);transform-origin:0 0;font-family:'Liberation Sans',sans-serif;-webkit-text-stroke:0.22px #f4f4f4">5688.3</div>
<div class="t" style="left:904.00px;top:112.81px;font-size:6.6px;color:#a4a4a4;transform:scaleX(1.0900);transform-origin:0 0;font-family:'Liberation Sans',sans-serif;"> Balance</div>
<div class="t" style="left:890.00px;top:120.31px;font-size:6.6px;color:#f4f4f4;transform:scaleX(1.1925);transform-origin:0 0;font-family:'Liberation Sans',sans-serif;-webkit-text-stroke:0.22px #f4f4f4">-20.81</div>
<div class="t" style="left:912.32px;top:120.31px;font-size:6.6px;color:#a4a4a4;transform:scaleX(1.1925);transform-origin:0 0;font-family:'Liberation Sans',sans-serif;"> profit</div>
<div class="t" style="left:834.00px;top:290.01px;font-size:6.6px;color:#f4f4f4;transform:scaleX(1.1189);transform-origin:0 0;font-family:'Liberation Sans',sans-serif;-webkit-text-stroke:0.22px #f4f4f4">2374.21785714</div>
<div class="t" style="left:885.34px;top:290.01px;font-size:6.6px;color:#a4a4a4;transform:scaleX(1.1189);transform-origin:0 0;font-family:'Liberation Sans',sans-serif;"> AvgPriceTotal</div>
<div class="t" style="left:884.00px;top:297.51px;font-size:6.6px;color:#f4f4f4;transform:scaleX(1.1714);transform-origin:0 0;font-family:'Liberation Sans',sans-serif;-webkit-text-stroke:0.22px #f4f4f4">0.14</div>
<div class="t" style="left:899.05px;top:297.51px;font-size:6.6px;color:#a4a4a4;transform:scaleX(1.1714);transform-origin:0 0;font-family:'Liberation Sans',sans-serif;"> TotalLots</div>
<div class="t" style="left:839.00px;top:305.01px;font-size:6.6px;color:#f4f4f4;transform:scaleX(1.0987);transform-origin:0 0;font-family:'Liberation Sans',sans-serif;-webkit-text-stroke:0.22px #f4f4f4">2373.69923077</div>
<div class="t" style="left:889.41px;top:305.01px;font-size:6.6px;color:#a4a4a4;transform:scaleX(1.0987);transform-origin:0 0;font-family:'Liberation Sans',sans-serif;"> AvgPriceSell</div>
<div class="t" style="left:875.50px;top:312.51px;font-size:6.6px;color:#f4f4f4;transform:scaleX(1.1606);transform-origin:0 0;font-family:'Liberation Sans',sans-serif;-webkit-text-stroke:0.22px #f4f4f4">0.13</div>
<div class="t" style="left:890.41px;top:312.51px;font-size:6.6px;color:#a4a4a4;transform:scaleX(1.1606);transform-origin:0 0;font-family:'Liberation Sans',sans-serif;"> TotalLotSell</div>
<div class="t" style="left:862.50px;top:320.01px;font-size:6.6px;color:#f4f4f4;transform:scaleX(1.1033);transform-origin:0 0;font-family:'Liberation Sans',sans-serif;-webkit-text-stroke:0.22px #f4f4f4">2380.96</div>
<div class="t" style="left:888.82px;top:320.01px;font-size:6.6px;color:#a4a4a4;transform:scaleX(1.1033);transform-origin:0 0;font-family:'Liberation Sans',sans-serif;"> AvgPriceBuy</div>
<div class="t" style="left:875.50px;top:327.51px;font-size:6.6px;color:#f4f4f4;transform:scaleX(1.1519);transform-origin:0 0;font-family:'Liberation Sans',sans-serif;-webkit-text-stroke:0.22px #f4f4f4">0.01</div>
<div class="t" style="left:890.30px;top:327.51px;font-size:6.6px;color:#a4a4a4;transform:scaleX(1.1519);transform-origin:0 0;font-family:'Liberation Sans',sans-serif;"> TotalLotBuy</div>
<div class="t" style="left:858.14px;top:335.06px;font-size:9.6px;color:#e2c458;transform:scaleX(0.9613);transform-origin:100% 0;font-family:'Liberation Serif',serif;-webkit-text-stroke:0.2px #e2c458">Comment Message</div>
<div class="t" style="left:138.50px;top:337.98px;font-size:11.6px;color:#e0913e;transform:scaleX(1.0291);transform-origin:0 0;font-family:'Liberation Sans',sans-serif;">Spread: 34.00</div>
<div class="t" style="left:212.80px;top:338.12px;font-size:3.4px;color:#c03020;font-weight:bold;transform:scaleX(1.1250);transform-origin:0 0;font-family:'Liberation Sans',sans-serif;">MAX</div>
<div class="t" style="left:212.80px;top:341.52px;font-size:3.4px;color:#d05828;font-weight:bold;transform:scaleX(1.1946);transform-origin:0 0;font-family:'Liberation Sans',sans-serif;">AVG</div>
<div class="t" style="left:212.80px;top:344.92px;font-size:3.4px;color:#c8a030;font-weight:bold;transform:scaleX(1.3639);transform-origin:0 0;font-family:'Liberation Sans',sans-serif;">MIN</div>
<div class="t" style="left:224.00px;top:337.95px;font-size:3.6px;color:#d04020;transform:scaleX(1.3098);transform-origin:0 0;font-family:'Liberation Sans',sans-serif;">34.00</div>
<div class="t" style="left:224.00px;top:341.35px;font-size:3.6px;color:#e08030;transform:scaleX(1.3098);transform-origin:0 0;font-family:'Liberation Sans',sans-serif;">34.00</div>
<div class="t" style="left:224.00px;top:344.75px;font-size:3.6px;color:#c8b040;transform:scaleX(1.3098);transform-origin:0 0;font-family:'Liberation Sans',sans-serif;">34.00</div>
<div class="t" style="left:242.60px;top:337.37px;font-size:5px;color:#8a8a8a;transform:scaleX(0.9383);transform-origin:0 0;font-family:'Liberation Sans',sans-serif;">Status</div>
<div class="t" style="left:243.60px;top:342.86px;font-size:8.2px;color:#38b8c4;transform:scaleX(1.0623);transform-origin:0 0;font-family:'Liberation Sans',sans-serif;">stopped</div>
<div class="a" style="left:137.3px;top:351.3px;width:0.8px;height:2px;background:#a0a0a0;"></div>
<div class="t" style="left:137.60px;top:352.48px;font-size:6px;color:#e4e4e4;transform:scaleX(0.8928);transform-origin:0 0;font-family:'Liberation Serif',serif;-webkit-text-stroke:0.25px #e4e4e4">24 Jul 2024</div>
<div class="a" style="left:169px;top:351.3px;width:0.8px;height:2px;background:#a0a0a0;"></div>
<div class="t" style="left:169.30px;top:352.48px;font-size:6px;color:#e4e4e4;transform:scaleX(0.8426);transform-origin:0 0;font-family:'Liberation Serif',serif;-webkit-text-stroke:0.25px #e4e4e4">24 Jul 15:15</div>
<div class="a" style="left:201.2px;top:351.3px;width:0.8px;height:2px;background:#a0a0a0;"></div>
<div class="t" style="left:201.50px;top:352.48px;font-size:6px;color:#e4e4e4;transform:scaleX(0.8426);transform-origin:0 0;font-family:'Liberation Serif',serif;-webkit-text-stroke:0.25px #e4e4e4">24 Jul 15:55</div>
<div class="a" style="left:233.1px;top:351.3px;width:0.8px;height:2px;background:#a0a0a0;"></div>
<div class="t" style="left:233.40px;top:352.48px;font-size:6px;color:#e4e4e4;transform:scaleX(0.8426);transform-origin:0 0;font-family:'Liberation Serif',serif;-webkit-text-stroke:0.25px #e4e4e4">24 Jul 16:35</div>
<div class="a" style="left:265.4px;top:351.3px;width:0.8px;height:2px;background:#a0a0a0;"></div>
<div class="t" style="left:265.70px;top:352.48px;font-size:6px;color:#e4e4e4;transform:scaleX(0.8426);transform-origin:0 0;font-family:'Liberation Serif',serif;-webkit-text-stroke:0.25px #e4e4e4">24 Jul 17:15</div>
<div class="a" style="left:585px;top:351.3px;width:0.8px;height:2px;background:#a0a0a0;"></div>
<div class="t" style="left:585.30px;top:352.48px;font-size:6px;color:#e4e4e4;transform:scaleX(0.8426);transform-origin:0 0;font-family:'Liberation Serif',serif;-webkit-text-stroke:0.25px #e4e4e4">25 Jul 00:55</div>
<div class="a" style="left:617px;top:351.3px;width:0.8px;height:2px;background:#a0a0a0;"></div>
<div class="t" style="left:617.30px;top:352.48px;font-size:6px;color:#e4e4e4;transform:scaleX(0.8426);transform-origin:0 0;font-family:'Liberation Serif',serif;-webkit-text-stroke:0.25px #e4e4e4">25 Jul 01:35</div>
<div class="a" style="left:649px;top:351.3px;width:0.8px;height:2px;background:#a0a0a0;"></div>
<div class="t" style="left:649.30px;top:352.48px;font-size:6px;color:#e4e4e4;transform:scaleX(0.8426);transform-origin:0 0;font-family:'Liberation Serif',serif;-webkit-text-stroke:0.25px #e4e4e4">25 Jul 02:15</div>
<div class="a" style="left:681.2px;top:351.3px;width:0.8px;height:2px;background:#a0a0a0;"></div>
<div class="t" style="left:681.50px;top:352.48px;font-size:6px;color:#e4e4e4;transform:scaleX(0.8426);transform-origin:0 0;font-family:'Liberation Serif',serif;-webkit-text-stroke:0.25px #e4e4e4">25 Jul 02:55</div>
<div class="a" style="left:713px;top:351.3px;width:0.8px;height:2px;background:#a0a0a0;"></div>
<div class="t" style="left:713.30px;top:352.48px;font-size:6px;color:#e4e4e4;transform:scaleX(0.8426);transform-origin:0 0;font-family:'Liberation Serif',serif;-webkit-text-stroke:0.25px #e4e4e4">25 Jul 03:35</div>
<div class="a" style="left:745px;top:351.3px;width:0.8px;height:2px;background:#a0a0a0;"></div>
<div class="t" style="left:745.30px;top:352.48px;font-size:6px;color:#e4e4e4;transform:scaleX(0.8426);transform-origin:0 0;font-family:'Liberation Serif',serif;-webkit-text-stroke:0.25px #e4e4e4">25 Jul 04:15</div>
<div class="a" style="left:934.8px;top:68.95px;width:1.2px;height:0.8px;background:#b0b0b0;"></div>
<div class="t" style="left:937.40px;top:66.06px;font-size:6.2px;color:#f0f0f0;transform:scaleX(0.8139);transform-origin:0 0;font-family:'Liberation Serif',serif;-webkit-text-stroke:0.25px #f0f0f0">2432.20</div>
<div class="a" style="left:934.8px;top:85.49px;width:1.2px;height:0.8px;background:#b0b0b0;"></div>
<div class="t" style="left:937.40px;top:82.60px;font-size:6.2px;color:#f0f0f0;transform:scaleX(0.8139);transform-origin:0 0;font-family:'Liberation Serif',serif;-webkit-text-stroke:0.25px #f0f0f0">2428.50</div>
<div class="a" style="left:934.8px;top:102.03px;width:1.2px;height:0.8px;background:#b0b0b0;"></div>
<div class="t" style="left:937.40px;top:99.14px;font-size:6.2px;color:#f0f0f0;transform:scaleX(0.8139);transform-origin:0 0;font-family:'Liberation Serif',serif;-webkit-text-stroke:0.25px #f0f0f0">2424.70</div>
<div class="a" style="left:934.8px;top:118.57000000000001px;width:1.2px;height:0.8px;background:#b0b0b0;"></div>
<div class="t" style="left:937.40px;top:115.68px;font-size:6.2px;color:#f0f0f0;transform:scaleX(0.8139);transform-origin:0 0;font-family:'Liberation Serif',serif;-webkit-text-stroke:0.25px #f0f0f0">2421.00</div>
<div class="a" style="left:934.8px;top:135.10999999999999px;width:1.2px;height:0.8px;background:#b0b0b0;"></div>
<div class="t" style="left:937.40px;top:132.22px;font-size:6.2px;color:#f0f0f0;transform:scaleX(0.8139);transform-origin:0 0;font-family:'Liberation Serif',serif;-webkit-text-stroke:0.25px #f0f0f0">2417.20</div>
<div class="a" style="left:934.8px;top:151.64999999999998px;width:1.2px;height:0.8px;background:#b0b0b0;"></div>
<div class="t" style="left:937.40px;top:148.76px;font-size:6.2px;color:#f0f0f0;transform:scaleX(0.8139);transform-origin:0 0;font-family:'Liberation Serif',serif;-webkit-text-stroke:0.25px #f0f0f0">2413.50</div>
<div class="a" style="left:934.8px;top:168.19px;width:1.2px;height:0.8px;background:#b0b0b0;"></div>
<div class="t" style="left:937.40px;top:165.30px;font-size:6.2px;color:#f0f0f0;transform:scaleX(0.8139);transform-origin:0 0;font-family:'Liberation Serif',serif;-webkit-text-stroke:0.25px #f0f0f0">2409.70</div>
<div class="a" style="left:934.8px;top:184.73px;width:1.2px;height:0.8px;background:#b0b0b0;"></div>
<div class="t" style="left:937.40px;top:181.84px;font-size:6.2px;color:#f0f0f0;transform:scaleX(0.8139);transform-origin:0 0;font-family:'Liberation Serif',serif;-webkit-text-stroke:0.25px #f0f0f0">2406.00</div>
<div class="a" style="left:934.8px;top:201.26999999999998px;width:1.2px;height:0.8px;background:#b0b0b0;"></div>
<div class="t" style="left:937.40px;top:198.38px;font-size:6.2px;color:#f0f0f0;transform:scaleX(0.8139);transform-origin:0 0;font-family:'Liberation Serif',serif;-webkit-text-stroke:0.25px #f0f0f0">2402.30</div>
<div class="a" style="left:934.8px;top:217.80999999999997px;width:1.2px;height:0.8px;background:#b0b0b0;"></div>
<div class="t" style="left:937.40px;top:214.92px;font-size:6.2px;color:#f0f0f0;transform:scaleX(0.8139);transform-origin:0 0;font-family:'Liberation Serif',serif;-webkit-text-stroke:0.25px #f0f0f0">2398.50</div>
<div class="a" style="left:934.8px;top:234.34999999999997px;width:1.2px;height:0.8px;background:#b0b0b0;"></div>
<div class="t" style="left:937.40px;top:231.46px;font-size:6.2px;color:#f0f0f0;transform:scaleX(0.8139);transform-origin:0 0;font-family:'Liberation Serif',serif;-webkit-text-stroke:0.25px #f0f0f0">2394.80</div>
<div class="a" style="left:934.8px;top:250.89px;width:1.2px;height:0.8px;background:#b0b0b0;"></div>
<div class="t" style="left:937.40px;top:248.00px;font-size:6.2px;color:#f0f0f0;transform:scaleX(0.8139);transform-origin:0 0;font-family:'Liberation Serif',serif;-webkit-text-stroke:0.25px #f0f0f0">2391.00</div>
<div class="a" style="left:934.8px;top:267.43px;width:1.2px;height:0.8px;background:#b0b0b0;"></div>
<div class="t" style="left:937.40px;top:264.54px;font-size:6.2px;color:#f0f0f0;transform:scaleX(0.8139);transform-origin:0 0;font-family:'Liberation Serif',serif;-webkit-text-stroke:0.25px #f0f0f0">2387.30</div>
<div class="a" style="left:934.8px;top:283.96999999999997px;width:1.2px;height:0.8px;background:#b0b0b0;"></div>
<div class="t" style="left:937.40px;top:281.08px;font-size:6.2px;color:#f0f0f0;transform:scaleX(0.8139);transform-origin:0 0;font-family:'Liberation Serif',serif;-webkit-text-stroke:0.25px #f0f0f0">2383.50</div>
<div class="a" style="left:934.8px;top:300.51px;width:1.2px;height:0.8px;background:#b0b0b0;"></div>
<div class="t" style="left:937.40px;top:297.62px;font-size:6.2px;color:#f0f0f0;transform:scaleX(0.8139);transform-origin:0 0;font-family:'Liberation Serif',serif;-webkit-text-stroke:0.25px #f0f0f0">2379.80</div>
<div class="a" style="left:934.8px;top:317.05px;width:1.2px;height:0.8px;background:#b0b0b0;"></div>
<div class="t" style="left:937.40px;top:314.16px;font-size:6.2px;color:#f0f0f0;transform:scaleX(0.8139);transform-origin:0 0;font-family:'Liberation Serif',serif;-webkit-text-stroke:0.25px #f0f0f0">2376.10</div>
<div class="a" style="left:934.8px;top:333.59px;width:1.2px;height:0.8px;background:#b0b0b0;"></div>
<div class="t" style="left:937.40px;top:330.70px;font-size:6.2px;color:#f0f0f0;transform:scaleX(0.8139);transform-origin:0 0;font-family:'Liberation Serif',serif;-webkit-text-stroke:0.25px #f0f0f0">2372.30</div>
<div class="a" style="left:934.8px;top:350.13px;width:1.2px;height:0.8px;background:#b0b0b0;"></div>
<div class="t" style="left:937.40px;top:347.24px;font-size:6.2px;color:#f0f0f0;transform:scaleX(0.8139);transform-origin:0 0;font-family:'Liberation Serif',serif;-webkit-text-stroke:0.25px #f0f0f0">2368.60</div>
<div class="a" style="left:935.5px;top:320.2px;width:20.5px;height:7px;background:#ffffff;"></div>
<div class="t" style="left:937.40px;top:320.91px;font-size:6.2px;color:#000;transform:scaleX(0.8139);transform-origin:0 0;font-family:'Liberation Serif',serif;">2374.46</div>
<div class="a" style="left:134.5px;top:361px;width:822.5px;height:14px;background:#f0f0f0;"></div>
<div class="a" style="left:134.5px;top:361px;width:822.5px;height:0.8px;background:#a8a8a8;"></div>
<div class="a" style="left:136.3px;top:361.5px;width:45px;height:10.5px;background:#e6e6e6;"></div>
<div class="t" style="left:143.50px;top:363.47px;font-size:7px;color:#a0a0a0;transform:scaleX(0.7958);transform-origin:0 0;font-family:'Liberation Sans',sans-serif;">XAUUSD,M5</div>
<div class="a" style="left:182px;top:361px;width:64px;height:11px;background:#ffffff;border:0.8px solid #909090;border-top:none;box-shadow:0.6px 0.6px 0 #707070"></div>
<div class="t" style="left:187.50px;top:363.47px;font-size:7px;color:#303030;transform:scaleX(0.8065);transform-origin:0 0;font-family:'Liberation Sans',sans-serif;">XAUUSD,M5 (visual)</div>
<svg style="left:941px;top:363.5px" width="4" height="6"><path d="M3 0.5L1 3l2 2.5" fill="none" stroke="#909090" stroke-width="0.8"/></svg>
<svg style="left:950px;top:363.5px" width="4" height="6"><path d="M1 0.5L3 3l-2 2.5" fill="none" stroke="#909090" stroke-width="0.8"/></svg>
<div class="a" style="left:1px;top:373.5px;width:956px;height:134px;background:#ffffff;"></div>
<div class="a" style="left:1px;top:372.5px;width:956px;height:1px;background:#e0e0e0;"></div>
<div class="a" style="left:1px;top:373.5px;width:7px;height:133px;background:#bdd0e4;"></div>
<div class="a" style="left:1px;top:373.5px;width:7px;height:8.2px;background:#eef2f6;"></div>
<div class="a" style="left:8px;top:374px;width:0.8px;height:133px;background:#d8d8d8;"></div>
<svg style="left:2.2px;top:375.8px" width="5" height="5"><path d="M0.5 0.5L3.8 3.3M3.8 0.5L0.5 3.3" stroke="#222" stroke-width="1"/></svg>
<div class="t" style="left:1.2px;top:505px;font-size:6.6px;color:#2a3a50;transform:rotate(-90deg) scaleX(0.823);transform-origin:0 0;font-family:'Liberation Sans'">Tester</div>
<div class="a" style="left:956.2px;top:373.5px;width:0.8px;height:134px;background:#c0c0c0;"></div>
<div class="a" style="left:12px;top:379.3px;width:60px;height:11px;background:#e8e8e8;border:0.8px solid #b8b8b8"></div>
<div class="t" style="left:15.00px;top:381.74px;font-size:6.8px;color:#222;transform:scaleX(0.8000);transform-origin:0 0;font-family:'Liberation Sans',sans-serif;">Expert Advisor</div>
<svg style="left:64.5px;top:382.8px" width="5" height="4"><path d="M0.5 0.5L2.5 2.5L4.5 0.5" fill="none" stroke="#555" stroke-width="0.8"/></svg>
<div class="a" style="left:75px;top:379.3px;width:798px;height:11px;background:#f3f3f3;border:0.8px solid #b8b8b8"></div>
<div class="t" style="left:78.00px;top:381.74px;font-size:6.8px;color:#222;transform:scaleX(0.8000);transform-origin:0 0;font-family:'Liberation Sans',sans-serif;">GoldenFlow  H11.ex4</div>
<svg style="left:865.5px;top:382.8px" width="5" height="4"><path d="M0.5 0.5L2.5 2.5L4.5 0.5" fill="none" stroke="#555" stroke-width="0.8"/></svg>
<div class="a" style="left:863.5px;top:380.1px;width:8.7px;height:9.4px;background:#ffffff;"></div>
<svg style="left:865.5px;top:382.8px" width="5" height="4"><path d="M0.5 0.5L2.5 2.5L4.5 0.5" fill="none" stroke="#555" stroke-width="0.8"/></svg>
<div class="a" style="left:877.5px;top:379.3px;width:74.5px;height:11px;background:#e1e1e1;border:0.8px solid #adadad"></div>
<div class="t" style="left:888.86px;top:381.74px;font-size:6.8px;color:#222;transform:scaleX(0.7800);transform-origin:50% 0;font-family:'Liberation Sans',sans-serif;">Expert properties</div>
<div class="t" style="left:47.44px;top:396.54px;font-size:6.8px;color:#333;transform:scaleX(0.8000);transform-origin:100% 0;font-family:'Liberation Sans',sans-serif;">Symbol:</div>
<div class="a" style="left:75px;top:394px;width:672px;height:10.6px;background:#e8e8e8;border:0.8px solid #b8b8b8"></div>
<div class="t" style="left:78.00px;top:396.44px;font-size:6.8px;color:#222;transform:scaleX(0.8000);transform-origin:0 0;font-family:'Liberation Sans',sans-serif;">XAUUSD, Gold vs US Dollar</div>
<svg style="left:739.5px;top:397.5px" width="5" height="4"><path d="M0.5 0.5L2.5 2.5L4.5 0.5" fill="none" stroke="#555" stroke-width="0.8"/></svg>
<div class="t" style="left:787.95px;top:396.54px;font-size:6.8px;color:#333;transform:scaleX(0.8000);transform-origin:100% 0;font-family:'Liberation Sans',sans-serif;">Period:</div>
<div class="a" style="left:813.3px;top:394px;width:60px;height:10.6px;background:#e8e8e8;border:0.8px solid #b8b8b8"></div>
<div class="t" style="left:816.30px;top:396.44px;font-size:6.8px;color:#222;transform:scaleX(0.8000);transform-origin:0 0;font-family:'Liberation Sans',sans-serif;">M5</div>
<svg style="left:865.8px;top:397.5px" width="5" height="4"><path d="M0.5 0.5L2.5 2.5L4.5 0.5" fill="none" stroke="#555" stroke-width="0.8"/></svg>
<div class="a" style="left:877.5px;top:394px;width:74.5px;height:10.6px;background:#e1e1e1;border:0.8px solid #adadad"></div>
<div class="t" style="left:887.35px;top:396.44px;font-size:6.8px;color:#222;transform:scaleX(0.7800);transform-origin:50% 0;font-family:'Liberation Sans',sans-serif;">Symbol properties</div>
<div class="t" style="left:51.59px;top:410.84px;font-size:6.8px;color:#333;transform:scaleX(0.8000);transform-origin:100% 0;font-family:'Liberation Sans',sans-serif;">Model:</div>
<div class="a" style="left:75px;top:408.6px;width:672px;height:10.3px;background:#e8e8e8;border:0.8px solid #b8b8b8"></div>
<svg style="left:739.5px;top:412.1px" width="5" height="4"><path d="M0.5 0.5L2.5 2.5L4.5 0.5" fill="none" stroke="#555" stroke-width="0.8"/></svg>
<div class="t" style="left:78.00px;top:411.04px;font-size:6.8px;color:#222;transform:scaleX(0.8250);transform-origin:0 0;font-family:'Liberation Sans',sans-serif;">Every tick (the most precise method based on all available least timeframes to generate each tick)</div>
<div class="t" style="left:785.68px;top:410.84px;font-size:6.8px;color:#333;transform:scaleX(0.8000);transform-origin:100% 0;font-family:'Liberation Sans',sans-serif;">Spread:</div>
<div class="a" style="left:813.3px;top:408.6px;width:60px;height:10.3px;background:#ffffff;border:0.8px solid #b8b8b8"></div>
<div class="t" style="left:816.30px;top:411.04px;font-size:6.8px;color:#222;transform:scaleX(0.8000);transform-origin:0 0;font-family:'Liberation Sans',sans-serif;">Current</div>
<svg style="left:865.8px;top:412.1px" width="5" height="4"><path d="M0.5 0.5L2.5 2.5L4.5 0.5" fill="none" stroke="#555" stroke-width="0.8"/></svg>
<div class="a" style="left:877.5px;top:408.6px;width:74.5px;height:10.3px;background:#e1e1e1;border:0.8px solid #adadad"></div>
<div class="t" style="left:897.93px;top:411.04px;font-size:6.8px;color:#222;transform:scaleX(0.7800);transform-origin:50% 0;font-family:'Liberation Sans',sans-serif;">Open chart</div>
<div class="t" style="left:826.21px;top:426.64px;font-size:6.8px;color:#333;transform:scaleX(0.7409);transform-origin:100% 0;font-family:'Liberation Sans',sans-serif;">Optimization</div>
<div class="a" style="left:866px;top:425.7px;width:7.5px;height:7.5px;background:#fff;border:0.8px solid #999"></div>
<div class="a" style="left:877.5px;top:423px;width:74.5px;height:10.8px;background:#e1e1e1;border:0.8px solid #adadad"></div>
<div class="t" style="left:894.34px;top:425.44px;font-size:6.8px;color:#222;transform:scaleX(0.7800);transform-origin:50% 0;font-family:'Liberation Sans',sans-serif;">Modify expert</div>
<div class="t" style="left:39.28px;top:425.74px;font-size:6.8px;color:#333;transform:scaleX(0.8000);transform-origin:100% 0;font-family:'Liberation Sans',sans-serif;">Use date</div>
<div class="a" style="left:68px;top:425px;width:7.6px;height:7.6px;background:#fff;border:0.8px solid #333"></div>
<svg style="left:69px;top:426.2px" width="6" height="6"><path d="M0.8 2.8L2.4 4.6L5.2 0.8" fill="none" stroke="#111" stroke-width="0.9"/></svg>
<div class="t" style="left:29.20px;top:441.24px;font-size:6.8px;color:#333;transform:scaleX(0.8000);transform-origin:100% 0;font-family:'Liberation Sans',sans-serif;">Visual mode</div>
<div class="a" style="left:68px;top:440.3px;width:7.6px;height:7.6px;background:#fff;border:0.8px solid #333"></div>
<svg style="left:69px;top:441.5px" width="6" height="6"><path d="M0.8 2.8L2.4 4.6L5.2 0.8" fill="none" stroke="#111" stroke-width="0.9"/></svg>
<div class="t" style="left:118.25px;top:424.74px;font-size:6.8px;color:#333;transform:scaleX(0.8000);transform-origin:100% 0;font-family:'Liberation Sans',sans-serif;">From:</div>
<div class="a" style="left:138.3px;top:423.2px;width:61px;height:9.3px;background:#fff;border:0.8px solid #9a9a9a"></div>
<div class="t" style="left:139.80px;top:424.84px;font-size:6.8px;color:#222;transform:scaleX(0.7800);transform-origin:0 0;font-family:'Liberation Sans',sans-serif;">2024.07.01</div>
<div class="a" style="left:183.8px;top:425.2px;width:5px;height:5px;background:#d8d8d8;border:0.6px solid #888"></div>
<svg style="left:190.3px;top:427.0px" width="4" height="3"><path d="M0 0h3l-1.5 2z" fill="#333"/></svg>
<div class="t" style="left:253.43px;top:424.74px;font-size:6.8px;color:#333;transform:scaleX(0.8000);transform-origin:100% 0;font-family:'Liberation Sans',sans-serif;">To:</div>
<div class="a" style="left:265.2px;top:423.2px;width:61px;height:9.3px;background:#fff;border:0.8px solid #9a9a9a"></div>
<div class="t" style="left:266.70px;top:424.84px;font-size:6.8px;color:#222;transform:scaleX(0.7800);transform-origin:0 0;font-family:'Liberation Sans',sans-serif;">2024.12.28</div>
<div class="a" style="left:310.7px;top:425.2px;width:5px;height:5px;background:#d8d8d8;border:0.6px solid #888"></div>
<svg style="left:317.2px;top:427.0px" width="4" height="3"><path d="M0 0h3l-1.5 2z" fill="#333"/></svg>
<div class="a" style="left:82px;top:442.2px;width:82px;height:3px;background:#e8e8e8;border:0.7px solid #b0b0b0"></div>
<div class="a" style="left:162px;top:438px;width:4.5px;height:11px;background:#f0f0f0;border:0.8px solid #9a9a9a"></div>
<div class="a" style="left:172.5px;top:437.3px;width:11px;height:11px;background:#e8e8e8;border:0.8px solid #b0b0b0"></div>
<div class="a" style="left:176.3px;top:440.2px;width:0.9px;height:5px;background:#555;"></div>
<div class="a" style="left:179px;top:440.2px;width:0.9px;height:5px;background:#555;"></div>
<div class="a" style="left:188px;top:437.3px;width:74px;height:11px;background:#e1e1e1;border:0.8px solid #b8b8b8"></div>
<div class="t" style="left:214.61px;top:439.84px;font-size:6.8px;color:#222;transform:scaleX(0.7800);transform-origin:50% 0;font-family:'Liberation Sans',sans-serif;">Skip to</div>
<div class="a" style="left:265.2px;top:438.3px;width:61px;height:9.3px;background:#fff;border:0.8px solid #9a9a9a"></div>
<div class="t" style="left:266.70px;top:439.94px;font-size:6.8px;color:#222;transform:scaleX(0.7800);transform-origin:0 0;font-family:'Liberation Sans',sans-serif;">2025.06.25</div>
<div class="a" style="left:310.7px;top:440.3px;width:5px;height:5px;background:#d8d8d8;border:0.6px solid #888"></div>
<svg style="left:317.2px;top:442.1px" width="4" height="3"><path d="M0 0h3l-1.5 2z" fill="#333"/></svg>
<div class="a" style="left:12px;top:480px;width:861px;height:10px;background:#e6e6e6;border:0.8px solid #bcbcbc"></div>
<div class="a" style="left:12.5px;top:480.5px;width:137px;height:9px;background:#06b025;"></div>
<div class="a" style="left:877.5px;top:480.5px;width:74.5px;height:10.5px;background:#e1e1e1;border:0.8px solid #adadad"></div>
<div class="t" style="left:907.00px;top:482.94px;font-size:6.8px;color:#222;font-weight:bold;transform:scaleX(0.7800);transform-origin:50% 0;font-family:'Liberation Sans',sans-serif;">Start</div>
<div class="a" style="left:9px;top:494.3px;width:948px;height:13px;background:#f0f0f0;"></div>
<div class="a" style="left:9px;top:494.3px;width:948px;height:0.9px;background:#505050;"></div>
<div class="a" style="left:10.5px;top:494.3px;width:30px;height:10px;background:#ffffff;border:0.8px solid #707070;border-top:none;box-shadow:0.7px 0.7px 0 #505050"></div>
<div class="t" style="left:15.00px;top:496.37px;font-size:7px;color:#222;transform:scaleX(0.7800);transform-origin:0 0;font-family:'Liberation Sans',sans-serif;">Settings</div>
<div class="t" style="left:45.50px;top:496.37px;font-size:7px;color:#a8a8a8;transform:scaleX(0.7800);transform-origin:0 0;font-family:'Liberation Sans',sans-serif;">Results</div>
<div class="a" style="left:69.4px;top:496.5px;width:0.8px;height:7px;background:#909090;"></div>
<div class="t" style="left:74.50px;top:496.37px;font-size:7px;color:#a8a8a8;transform:scaleX(0.7800);transform-origin:0 0;font-family:'Liberation Sans',sans-serif;">Graph</div>
<div class="a" style="left:95.4px;top:496.5px;width:0.8px;height:7px;background:#909090;"></div>
<div class="t" style="left:100.00px;top:496.37px;font-size:7px;color:#a8a8a8;transform:scaleX(0.7800);transform-origin:0 0;font-family:'Liberation Sans',sans-serif;">Report</div>
<div class="a" style="left:122px;top:496.5px;width:0.8px;height:7px;background:#909090;"></div>
<div class="t" style="left:127.00px;top:496.37px;font-size:7px;color:#a8a8a8;transform:scaleX(0.7800);transform-origin:0 0;font-family:'Liberation Sans',sans-serif;">Journal</div>
<div class="a" style="left:152px;top:496.5px;width:0.8px;height:7px;background:#909090;"></div>
<div class="a" style="left:1px;top:507.5px;width:956px;height:12.5px;background:#f0f0f0;"></div>
<div class="a" style="left:1px;top:507.5px;width:956px;height:0.8px;background:#e4e4e4;"></div>
<div class="t" style="left:2.00px;top:510.54px;font-size:6.8px;color:#222;transform:scaleX(0.8000);transform-origin:0 0;font-family:'Liberation Sans',sans-serif;">For Help, press F1</div>
<div class="a" style="left:602px;top:509px;width:0.8px;height:10px;background:#c8c8c8;"></div>
<div class="a" style="left:660px;top:509px;width:0.8px;height:10px;background:#c8c8c8;"></div>
<div class="a" style="left:711px;top:509px;width:0.8px;height:10px;background:#c8c8c8;"></div>
<div class="a" style="left:746px;top:509px;width:0.8px;height:10px;background:#c8c8c8;"></div>
<div class="a" style="left:783px;top:509px;width:0.8px;height:10px;background:#c8c8c8;"></div>
<div class="a" style="left:817px;top:509px;width:0.8px;height:10px;background:#c8c8c8;"></div>
<div class="a" style="left:852px;top:509px;width:0.8px;height:10px;background:#c8c8c8;"></div>
<div class="a" style="left:885px;top:509px;width:0.8px;height:10px;background:#c8c8c8;"></div>
<div class="t" style="left:605.00px;top:510.54px;font-size:6.8px;color:#222;transform:scaleX(0.8000);transform-origin:0 0;font-family:'Liberation Sans',sans-serif;">Default</div>
<svg style="left:887px;top:511px" width="12" height="8"><rect x="0" y="0" width="11.8" height="6.5" fill="#7aa850"/><path d="M0 6.5L11.8 1.5V6.5z" fill="#3a7a98"/><path d="M0 5.8L11.8 1" stroke="#e8f0d0" stroke-width="0.7"/></svg>
<div class="t" style="left:900.50px;top:510.54px;font-size:6.8px;color:#222;transform:scaleX(0.8000);transform-origin:0 0;font-family:'Liberation Sans',sans-serif;">1783/4 kb</div>
<svg style="left:950px;top:512px" width="7" height="7"><path d="M6 0.5L0.5 6M6 3L3 6" stroke="#a0a0a0" stroke-width="0.8"/></svg>
<div class="a" style="left:272px;top:59px;width:312px;height:358px;background:rgba(0,0,0,0.14);filter:blur(1.2px)"></div>
<div class="a" style="left:270.5px;top:57.2px;width:312.6px;height:358.4px;background:#f0f0f0;border:0.8px solid #9a9a9a"></div>
<div class="a" style="left:271.3px;top:58px;width:311px;height:14.8px;background:#ffffff;"></div>
<div class="t" style="left:275.00px;top:61.67px;font-size:7px;color:#303030;transform:scaleX(0.8215);transform-origin:0 0;font-family:'Liberation Sans',sans-serif;">GoldenFlow  H11</div>
<div class="t" style="left:546.41px;top:61.64px;font-size:6.8px;color:#333;transform-origin:50% 0;font-family:'Liberation Sans',sans-serif;">?</div>
<svg style="left:568.3px;top:61.6px" width="6" height="6"><path d="M0.5 0.5L5.5 5.5M5.5 0.5L0.5 5.5" stroke="#333" stroke-width="0.8"/></svg>
<div class="a" style="left:273.3px;top:87px;width:305.7px;height:309.7px;background:#ffffff;border:0.8px solid #d9d9d9"></div>
<div class="a" style="left:276.7px;top:77.5px;width:21px;height:9.8px;background:#f0f0f0;border:0.8px solid #d9d9d9;border-bottom:none"></div>
<div class="t" style="left:279.50px;top:78.37px;font-size:7px;color:#303030;transform:scaleX(0.7800);transform-origin:0 0;font-family:'Liberation Sans',sans-serif;">Testing</div>
<div class="a" style="left:319px;top:77.5px;width:33.5px;height:9.8px;background:#f0f0f0;border:0.8px solid #d9d9d9;border-bottom:none"></div>
<div class="t" style="left:322.00px;top:78.37px;font-size:7px;color:#303030;transform:scaleX(0.7800);transform-origin:0 0;font-family:'Liberation Sans',sans-serif;">Optimization</div>
<div class="a" style="left:297.3px;top:75.8px;width:22px;height:12px;background:#ffffff;border:0.8px solid #d9d9d9;border-bottom:none"></div>
<div class="t" style="left:300.50px;top:76.97px;font-size:7px;color:#303030;transform:scaleX(0.7800);transform-origin:0 0;font-family:'Liberation Sans',sans-serif;">Inputs</div>
<div class="a" style="left:279.4px;top:91px;width:295.6px;height:285.3px;background:#ffffff;border:0.8px solid #a8a8a8"></div>
<div class="a" style="left:377.6px;top:91.8px;width:0.8px;height:13px;background:#e5e5e5;"></div>
<div class="a" style="left:425.6px;top:91.8px;width:0.8px;height:13px;background:#e5e5e5;"></div>
<div class="a" style="left:474.6px;top:91.8px;width:0.8px;height:13px;background:#e5e5e5;"></div>
<div class="a" style="left:522.7px;top:91.8px;width:0.8px;height:13px;background:#e5e5e5;"></div>
<div class="t" style="left:283.30px;top:94.27px;font-size:7px;color:#303030;transform:scaleX(0.7800);transform-origin:0 0;font-family:'Liberation Sans',sans-serif;">Variable</div>
<div class="t" style="left:405.92px;top:94.27px;font-size:7px;color:#303030;transform:scaleX(0.7800);transform-origin:100% 0;font-family:'Liberation Sans',sans-serif;">Value</div>
<div class="t" style="left:457.52px;top:94.27px;font-size:7px;color:#303030;transform:scaleX(0.7800);transform-origin:100% 0;font-family:'Liberation Sans',sans-serif;">Start</div>
<div class="t" style="left:506.20px;top:94.27px;font-size:7px;color:#303030;transform:scaleX(0.7800);transform-origin:100% 0;font-family:'Liberation Sans',sans-serif;">Step</div>
<div class="t" style="left:556.40px;top:94.27px;font-size:7px;color:#303030;transform:scaleX(0.7800);transform-origin:100% 0;font-family:'Liberation Sans',sans-serif;">Stop</div>
<div class="a" style="left:280.2px;top:104px;width:294.0px;height:10px;background:#ebebeb;"></div>
<div class="a" style="left:280.2px;top:103.7px;width:294.0px;height:0.6px;background:#d8d8d8;"></div>
<div class="a" style="left:377.6px;top:104px;width:0.8px;height:10px;background:#d8d8d8;"></div>
<div class="a" style="left:425.6px;top:104px;width:0.8px;height:10px;background:#d8d8d8;"></div>
<div class="a" style="left:474.6px;top:104px;width:0.8px;height:10px;background:#d8d8d8;"></div>
<div class="a" style="left:522.7px;top:104px;width:0.8px;height:10px;background:#d8d8d8;"></div>
<svg style="left:282.6px;top:106px" width="7" height="7"><path d="M0.4 6V0.4H6" fill="none" stroke="#909090" stroke-width="0.7"/><path d="M1.1 5.6V1.1H5.6" fill="none" stroke="#505050" stroke-width="0.6"/></svg>
<div class="t" style="left:291.70px;top:105.24px;font-size:7.4px;color:#303030;letter-spacing:0.25px;transform:scaleX(0.6857);transform-origin:0 0;font-family:'Liberation Sans',sans-serif;">SYSTEM_MODE</div>
<div class="t" style="left:380.00px;top:105.24px;font-size:7.4px;color:#303030;letter-spacing:0.25px;transform:scaleX(0.6854);transform-origin:0 0;font-family:'Liberation Sans',sans-serif;">AUTO</div>
<div class="t" style="left:428.50px;top:105.24px;font-size:7.4px;color:#303030;letter-spacing:0.25px;transform:scaleX(0.6854);transform-origin:0 0;font-family:'Liberation Sans',sans-serif;">AUTO</div>
<div class="t" style="left:525.70px;top:105.24px;font-size:7.4px;color:#303030;letter-spacing:0.25px;transform:scaleX(0.6854);transform-origin:0 0;font-family:'Liberation Sans',sans-serif;">AUTO</div>
<div class="a" style="left:280.2px;top:114px;width:294.0px;height:10px;background:#ffffff;"></div>
<div class="a" style="left:280.2px;top:113.7px;width:294.0px;height:0.6px;background:#d8d8d8;"></div>
<div class="a" style="left:377.6px;top:114px;width:0.8px;height:10px;background:#e4e4e4;"></div>
<div class="a" style="left:425.6px;top:114px;width:0.8px;height:10px;background:#e4e4e4;"></div>
<div class="a" style="left:474.6px;top:114px;width:0.8px;height:10px;background:#e4e4e4;"></div>
<div class="a" style="left:522.7px;top:114px;width:0.8px;height:10px;background:#e4e4e4;"></div>
<svg style="left:282.6px;top:116px" width="7" height="7"><path d="M0.4 6V0.4H6" fill="none" stroke="#909090" stroke-width="0.7"/><path d="M1.1 5.6V1.1H5.6" fill="none" stroke="#505050" stroke-width="0.6"/></svg>
<div class="t" style="left:291.70px;top:115.24px;font-size:7.4px;color:#303030;letter-spacing:0.25px;transform:scaleX(0.6783);transform-origin:0 0;font-family:'Liberation Sans',sans-serif;">TradeMode</div>
<div class="t" style="left:380.00px;top:115.24px;font-size:7.4px;color:#303030;letter-spacing:0.25px;transform:scaleX(0.6588);transform-origin:0 0;font-family:'Liberation Sans',sans-serif;">All</div>
<div class="t" style="left:428.50px;top:115.24px;font-size:7.4px;color:#303030;letter-spacing:0.25px;transform:scaleX(0.6790);transform-origin:0 0;font-family:'Liberation Sans',sans-serif;">Buy</div>
<div class="t" style="left:525.70px;top:115.24px;font-size:7.4px;color:#303030;letter-spacing:0.25px;transform:scaleX(0.6790);transform-origin:0 0;font-family:'Liberation Sans',sans-serif;">Buy</div>
<div class="a" style="left:280.2px;top:124px;width:294.0px;height:10px;background:#ebebeb;"></div>
<div class="a" style="left:280.2px;top:123.7px;width:294.0px;height:0.6px;background:#d8d8d8;"></div>
<div class="a" style="left:377.6px;top:124px;width:0.8px;height:10px;background:#d8d8d8;"></div>
<div class="a" style="left:425.6px;top:124px;width:0.8px;height:10px;background:#d8d8d8;"></div>
<div class="a" style="left:474.6px;top:124px;width:0.8px;height:10px;background:#d8d8d8;"></div>
<div class="a" style="left:522.7px;top:124px;width:0.8px;height:10px;background:#d8d8d8;"></div>
<svg style="left:282.6px;top:126px" width="7" height="7"><path d="M0.4 6V0.4H6" fill="none" stroke="#909090" stroke-width="0.7"/><path d="M1.1 5.6V1.1H5.6" fill="none" stroke="#505050" stroke-width="0.6"/></svg>
<div class="t" style="left:291.70px;top:125.24px;font-size:7.4px;color:#303030;letter-spacing:0.25px;transform:scaleX(0.6764);transform-origin:0 0;font-family:'Liberation Sans',sans-serif;">TradeSystem</div>
<div class="t" style="left:380.00px;top:125.24px;font-size:7.4px;color:#303030;letter-spacing:0.25px;transform:scaleX(0.6746);transform-origin:0 0;font-family:'Liberation Sans',sans-serif;">Stop</div>
<div class="t" style="left:428.50px;top:125.24px;font-size:7.4px;color:#303030;letter-spacing:0.25px;transform:scaleX(0.6657);transform-origin:0 0;font-family:'Liberation Sans',sans-serif;">Limit</div>
<div class="t" style="left:525.70px;top:125.24px;font-size:7.4px;color:#303030;letter-spacing:0.25px;transform:scaleX(0.6657);transform-origin:0 0;font-family:'Liberation Sans',sans-serif;">Limit</div>
<div class="a" style="left:280.2px;top:134px;width:294.0px;height:10px;background:#ffffff;"></div>
<div class="a" style="left:280.2px;top:133.7px;width:294.0px;height:0.6px;background:#d8d8d8;"></div>
<div class="a" style="left:377.6px;top:134px;width:0.8px;height:10px;background:#e4e4e4;"></div>
<div class="a" style="left:425.6px;top:134px;width:0.8px;height:10px;background:#e4e4e4;"></div>
<div class="a" style="left:474.6px;top:134px;width:0.8px;height:10px;background:#e4e4e4;"></div>
<div class="a" style="left:522.7px;top:134px;width:0.8px;height:10px;background:#e4e4e4;"></div>
<svg style="left:282.6px;top:136px" width="7" height="7"><path d="M0.4 6V0.4H6" fill="none" stroke="#909090" stroke-width="0.7"/><path d="M1.1 5.6V1.1H5.6" fill="none" stroke="#505050" stroke-width="0.6"/></svg>
<div class="t" style="left:291.70px;top:135.24px;font-size:7.4px;color:#303030;letter-spacing:0.25px;transform:scaleX(0.6854);transform-origin:0 0;font-family:'Liberation Sans',sans-serif;">TP_MODE</div>
<div class="t" style="left:380.00px;top:135.24px;font-size:7.4px;color:#303030;letter-spacing:0.25px;transform:scaleX(0.6873);transform-origin:0 0;font-family:'Liberation Sans',sans-serif;">MONEY</div>
<div class="t" style="left:428.50px;top:135.24px;font-size:7.4px;color:#303030;letter-spacing:0.25px;transform:scaleX(0.6873);transform-origin:0 0;font-family:'Liberation Sans',sans-serif;">MONEY</div>
<div class="t" style="left:525.70px;top:135.24px;font-size:7.4px;color:#303030;letter-spacing:0.25px;transform:scaleX(0.6873);transform-origin:0 0;font-family:'Liberation Sans',sans-serif;">MONEY</div>
<div class="a" style="left:280.2px;top:144px;width:294.0px;height:10px;background:#ebebeb;"></div>
<div class="a" style="left:280.2px;top:143.7px;width:294.0px;height:0.6px;background:#d8d8d8;"></div>
<div class="a" style="left:377.6px;top:144px;width:0.8px;height:10px;background:#d8d8d8;"></div>
<div class="a" style="left:425.6px;top:144px;width:0.8px;height:10px;background:#d8d8d8;"></div>
<div class="a" style="left:474.6px;top:144px;width:0.8px;height:10px;background:#d8d8d8;"></div>
<div class="a" style="left:522.7px;top:144px;width:0.8px;height:10px;background:#d8d8d8;"></div>
<svg style="left:282.6px;top:146px" width="7" height="7"><path d="M0.4 6V0.4H6" fill="none" stroke="#909090" stroke-width="0.7"/><path d="M1.1 5.6V1.1H5.6" fill="none" stroke="#505050" stroke-width="0.6"/></svg>
<div class="t" style="left:291.70px;top:145.24px;font-size:7.4px;color:#303030;letter-spacing:0.25px;transform:scaleX(0.6853);transform-origin:0 0;font-family:'Liberation Sans',sans-serif;">TP_MONEY</div>
<div class="t" style="left:403.73px;top:145.24px;font-size:7.4px;color:#303030;letter-spacing:0.25px;transform:scaleX(0.6912);transform-origin:100% 0;font-family:'Liberation Sans',sans-serif;">300.0</div>
<div class="t" style="left:457.40px;top:145.24px;font-size:7.4px;color:#303030;letter-spacing:0.25px;transform:scaleX(0.6899);transform-origin:100% 0;font-family:'Liberation Sans',sans-serif;">50.0</div>
<div class="t" style="left:510.16px;top:145.24px;font-size:7.4px;color:#303030;letter-spacing:0.25px;transform:scaleX(0.6877);transform-origin:100% 0;font-family:'Liberation Sans',sans-serif;">0.0</div>
<div class="t" style="left:560.76px;top:145.24px;font-size:7.4px;color:#303030;letter-spacing:0.25px;transform:scaleX(0.6877);transform-origin:100% 0;font-family:'Liberation Sans',sans-serif;">0.0</div>
<div class="a" style="left:280.2px;top:154px;width:294.0px;height:10px;background:#ffffff;"></div>
<div class="a" style="left:280.2px;top:153.7px;width:294.0px;height:0.6px;background:#d8d8d8;"></div>
<div class="a" style="left:377.6px;top:154px;width:0.8px;height:10px;background:#e4e4e4;"></div>
<div class="a" style="left:425.6px;top:154px;width:0.8px;height:10px;background:#e4e4e4;"></div>
<div class="a" style="left:474.6px;top:154px;width:0.8px;height:10px;background:#e4e4e4;"></div>
<div class="a" style="left:522.7px;top:154px;width:0.8px;height:10px;background:#e4e4e4;"></div>
<svg style="left:282.6px;top:156px" width="7" height="7"><path d="M0.4 6V0.4H6" fill="none" stroke="#909090" stroke-width="0.7"/><path d="M1.1 5.6V1.1H5.6" fill="none" stroke="#505050" stroke-width="0.6"/></svg>
<div class="t" style="left:291.70px;top:155.24px;font-size:7.4px;color:#303030;letter-spacing:0.25px;transform:scaleX(0.6790);transform-origin:0 0;font-family:'Liberation Sans',sans-serif;">TP_PIP</div>
<div class="t" style="left:412.46px;top:155.24px;font-size:7.4px;color:#303030;letter-spacing:0.25px;transform:scaleX(0.6877);transform-origin:100% 0;font-family:'Liberation Sans',sans-serif;">0.0</div>
<div class="t" style="left:453.03px;top:155.24px;font-size:7.4px;color:#303030;letter-spacing:0.25px;transform:scaleX(0.6912);transform-origin:100% 0;font-family:'Liberation Sans',sans-serif;">300.0</div>
<div class="t" style="left:510.16px;top:155.24px;font-size:7.4px;color:#303030;letter-spacing:0.25px;transform:scaleX(0.6877);transform-origin:100% 0;font-family:'Liberation Sans',sans-serif;">0.0</div>
<div class="t" style="left:560.76px;top:155.24px;font-size:7.4px;color:#303030;letter-spacing:0.25px;transform:scaleX(0.6877);transform-origin:100% 0;font-family:'Liberation Sans',sans-serif;">0.0</div>
<div class="a" style="left:280.2px;top:164px;width:294.0px;height:10px;background:#ebebeb;"></div>
<div class="a" style="left:280.2px;top:163.7px;width:294.0px;height:0.6px;background:#d8d8d8;"></div>
<div class="a" style="left:377.6px;top:164px;width:0.8px;height:10px;background:#d8d8d8;"></div>
<div class="a" style="left:425.6px;top:164px;width:0.8px;height:10px;background:#d8d8d8;"></div>
<div class="a" style="left:474.6px;top:164px;width:0.8px;height:10px;background:#d8d8d8;"></div>
<div class="a" style="left:522.7px;top:164px;width:0.8px;height:10px;background:#d8d8d8;"></div>
<svg style="left:282.6px;top:166px" width="7" height="7"><path d="M0.4 6V0.4H6" fill="none" stroke="#909090" stroke-width="0.7"/><path d="M1.1 5.6V1.1H5.6" fill="none" stroke="#505050" stroke-width="0.6"/></svg>
<div class="t" style="left:291.70px;top:165.24px;font-size:7.4px;color:#303030;letter-spacing:0.25px;transform:scaleX(0.6767);transform-origin:0 0;font-family:'Liberation Sans',sans-serif;">TP_Profit_Run_START</div>
<div class="t" style="left:412.46px;top:165.24px;font-size:7.4px;color:#303030;letter-spacing:0.25px;transform:scaleX(0.6877);transform-origin:100% 0;font-family:'Liberation Sans',sans-serif;">0.0</div>
<div class="t" style="left:457.40px;top:165.24px;font-size:7.4px;color:#303030;letter-spacing:0.25px;transform:scaleX(0.6899);transform-origin:100% 0;font-family:'Liberation Sans',sans-serif;">20.0</div>
<div class="t" style="left:510.16px;top:165.24px;font-size:7.4px;color:#303030;letter-spacing:0.25px;transform:scaleX(0.6877);transform-origin:100% 0;font-family:'Liberation Sans',sans-serif;">0.0</div>
<div class="t" style="left:560.76px;top:165.24px;font-size:7.4px;color:#303030;letter-spacing:0.25px;transform:scaleX(0.6877);transform-origin:100% 0;font-family:'Liberation Sans',sans-serif;">0.0</div>
<div class="a" style="left:280.2px;top:174px;width:294.0px;height:10px;background:#ffffff;"></div>
<div class="a" style="left:280.2px;top:173.7px;width:294.0px;height:0.6px;background:#d8d8d8;"></div>
<div class="a" style="left:377.6px;top:174px;width:0.8px;height:10px;background:#e4e4e4;"></div>
<div class="a" style="left:425.6px;top:174px;width:0.8px;height:10px;background:#e4e4e4;"></div>
<div class="a" style="left:474.6px;top:174px;width:0.8px;height:10px;background:#e4e4e4;"></div>
<div class="a" style="left:522.7px;top:174px;width:0.8px;height:10px;background:#e4e4e4;"></div>
<svg style="left:282.6px;top:176px" width="7" height="7"><path d="M0.4 6V0.4H6" fill="none" stroke="#909090" stroke-width="0.7"/><path d="M1.1 5.6V1.1H5.6" fill="none" stroke="#505050" stroke-width="0.6"/></svg>
<div class="t" style="left:291.70px;top:175.24px;font-size:7.4px;color:#303030;letter-spacing:0.25px;transform:scaleX(0.6766);transform-origin:0 0;font-family:'Liberation Sans',sans-serif;">TP_Profit_Run_STEP</div>
<div class="t" style="left:412.46px;top:175.24px;font-size:7.4px;color:#303030;letter-spacing:0.25px;transform:scaleX(0.6877);transform-origin:100% 0;font-family:'Liberation Sans',sans-serif;">0.0</div>
<div class="t" style="left:461.76px;top:175.24px;font-size:7.4px;color:#303030;letter-spacing:0.25px;transform:scaleX(0.6877);transform-origin:100% 0;font-family:'Liberation Sans',sans-serif;">5.0</div>
<div class="t" style="left:510.16px;top:175.24px;font-size:7.4px;color:#303030;letter-spacing:0.25px;transform:scaleX(0.6877);transform-origin:100% 0;font-family:'Liberation Sans',sans-serif;">0.0</div>
<div class="t" style="left:560.76px;top:175.24px;font-size:7.4px;color:#303030;letter-spacing:0.25px;transform:scaleX(0.6877);transform-origin:100% 0;font-family:'Liberation Sans',sans-serif;">0.0</div>
<div class="a" style="left:280.2px;top:184px;width:294.0px;height:10px;background:#ebebeb;"></div>
<div class="a" style="left:280.2px;top:183.7px;width:294.0px;height:0.6px;background:#d8d8d8;"></div>
<div class="a" style="left:377.6px;top:184px;width:0.8px;height:10px;background:#d8d8d8;"></div>
<div class="a" style="left:425.6px;top:184px;width:0.8px;height:10px;background:#d8d8d8;"></div>
<div class="a" style="left:474.6px;top:184px;width:0.8px;height:10px;background:#d8d8d8;"></div>
<div class="a" style="left:522.7px;top:184px;width:0.8px;height:10px;background:#d8d8d8;"></div>
<svg style="left:282.6px;top:186px" width="7" height="7"><path d="M0.4 6V0.4H6" fill="none" stroke="#909090" stroke-width="0.7"/><path d="M1.1 5.6V1.1H5.6" fill="none" stroke="#505050" stroke-width="0.6"/></svg>
<div class="t" style="left:291.70px;top:185.24px;font-size:7.4px;color:#303030;letter-spacing:0.25px;transform:scaleX(0.6709);transform-origin:0 0;font-family:'Liberation Sans',sans-serif;">TP_PIP_Trailing_Start_Price</div>
<div class="t" style="left:412.46px;top:185.24px;font-size:7.4px;color:#303030;letter-spacing:0.25px;transform:scaleX(0.6877);transform-origin:100% 0;font-family:'Liberation Sans',sans-serif;">0.0</div>
<div class="t" style="left:453.03px;top:185.24px;font-size:7.4px;color:#303030;letter-spacing:0.25px;transform:scaleX(0.6912);transform-origin:100% 0;font-family:'Liberation Sans',sans-serif;">200.0</div>
<div class="t" style="left:510.16px;top:185.24px;font-size:7.4px;color:#303030;letter-spacing:0.25px;transform:scaleX(0.6877);transform-origin:100% 0;font-family:'Liberation Sans',sans-serif;">0.0</div>
<div class="t" style="left:560.76px;top:185.24px;font-size:7.4px;color:#303030;letter-spacing:0.25px;transform:scaleX(0.6877);transform-origin:100% 0;font-family:'Liberation Sans',sans-serif;">0.0</div>
<div class="a" style="left:280.2px;top:194px;width:294.0px;height:10px;background:#ffffff;"></div>
<div class="a" style="left:280.2px;top:193.7px;width:294.0px;height:0.6px;background:#d8d8d8;"></div>
<div class="a" style="left:377.6px;top:194px;width:0.8px;height:10px;background:#e4e4e4;"></div>
<div class="a" style="left:425.6px;top:194px;width:0.8px;height:10px;background:#e4e4e4;"></div>
<div class="a" style="left:474.6px;top:194px;width:0.8px;height:10px;background:#e4e4e4;"></div>
<div class="a" style="left:522.7px;top:194px;width:0.8px;height:10px;background:#e4e4e4;"></div>
<svg style="left:282.6px;top:196px" width="7" height="7"><path d="M0.4 6V0.4H6" fill="none" stroke="#909090" stroke-width="0.7"/><path d="M1.1 5.6V1.1H5.6" fill="none" stroke="#505050" stroke-width="0.6"/></svg>
<div class="t" style="left:291.70px;top:195.24px;font-size:7.4px;color:#303030;letter-spacing:0.25px;transform:scaleX(0.6724);transform-origin:0 0;font-family:'Liberation Sans',sans-serif;">TP_PIP_Trailing_Step_Price</div>
<div class="t" style="left:412.46px;top:195.24px;font-size:7.4px;color:#303030;letter-spacing:0.25px;transform:scaleX(0.6877);transform-origin:100% 0;font-family:'Liberation Sans',sans-serif;">0.0</div>
<div class="t" style="left:453.03px;top:195.24px;font-size:7.4px;color:#303030;letter-spacing:0.25px;transform:scaleX(0.6912);transform-origin:100% 0;font-family:'Liberation Sans',sans-serif;">100.0</div>
<div class="t" style="left:510.16px;top:195.24px;font-size:7.4px;color:#303030;letter-spacing:0.25px;transform:scaleX(0.6877);transform-origin:100% 0;font-family:'Liberation Sans',sans-serif;">0.0</div>
<div class="t" style="left:560.76px;top:195.24px;font-size:7.4px;color:#303030;letter-spacing:0.25px;transform:scaleX(0.6877);transform-origin:100% 0;font-family:'Liberation Sans',sans-serif;">0.0</div>
<div class="a" style="left:280.2px;top:204px;width:294.0px;height:10px;background:#ebebeb;"></div>
<div class="a" style="left:280.2px;top:203.7px;width:294.0px;height:0.6px;background:#d8d8d8;"></div>
<div class="a" style="left:377.6px;top:204px;width:0.8px;height:10px;background:#d8d8d8;"></div>
<div class="a" style="left:425.6px;top:204px;width:0.8px;height:10px;background:#d8d8d8;"></div>
<div class="a" style="left:474.6px;top:204px;width:0.8px;height:10px;background:#d8d8d8;"></div>
<div class="a" style="left:522.7px;top:204px;width:0.8px;height:10px;background:#d8d8d8;"></div>
<svg style="left:282.6px;top:206px" width="7" height="7"><path d="M0.4 6V0.4H6" fill="none" stroke="#909090" stroke-width="0.7"/><path d="M1.1 5.6V1.1H5.6" fill="none" stroke="#505050" stroke-width="0.6"/></svg>
<div class="t" style="left:291.70px;top:205.24px;font-size:7.4px;color:#303030;letter-spacing:0.25px;transform:scaleX(0.6850);transform-origin:0 0;font-family:'Liberation Sans',sans-serif;">SL_MODE</div>
<div class="t" style="left:380.00px;top:205.24px;font-size:7.4px;color:#303030;letter-spacing:0.25px;transform:scaleX(0.6802);transform-origin:0 0;font-family:'Liberation Sans',sans-serif;">CUTLOSS_MO...</div>
<div class="t" style="left:428.50px;top:205.24px;font-size:7.4px;color:#303030;letter-spacing:0.25px;transform:scaleX(0.6802);transform-origin:0 0;font-family:'Liberation Sans',sans-serif;">CUTLOSS_MO...</div>
<div class="t" style="left:525.70px;top:205.24px;font-size:7.4px;color:#303030;letter-spacing:0.25px;transform:scaleX(0.6802);transform-origin:0 0;font-family:'Liberation Sans',sans-serif;">CUTLOSS_MO...</div>
<div class="a" style="left:280.2px;top:214px;width:294.0px;height:10px;background:#ffffff;"></div>
<div class="a" style="left:280.2px;top:213.7px;width:294.0px;height:0.6px;background:#d8d8d8;"></div>
<div class="a" style="left:377.6px;top:214px;width:0.8px;height:10px;background:#e4e4e4;"></div>
<div class="a" style="left:425.6px;top:214px;width:0.8px;height:10px;background:#e4e4e4;"></div>
<div class="a" style="left:474.6px;top:214px;width:0.8px;height:10px;background:#e4e4e4;"></div>
<div class="a" style="left:522.7px;top:214px;width:0.8px;height:10px;background:#e4e4e4;"></div>
<svg style="left:282.6px;top:216px" width="7" height="7"><path d="M0.4 6V0.4H6" fill="none" stroke="#909090" stroke-width="0.7"/><path d="M1.1 5.6V1.1H5.6" fill="none" stroke="#505050" stroke-width="0.6"/></svg>
<div class="t" style="left:291.70px;top:215.24px;font-size:7.4px;color:#303030;letter-spacing:0.25px;transform:scaleX(0.6824);transform-origin:0 0;font-family:'Liberation Sans',sans-serif;">SL_MONEY_CUT_Loss</div>
<div class="t" style="left:392.29px;top:215.24px;font-size:7.4px;color:#303030;letter-spacing:0.25px;transform:scaleX(0.6906);transform-origin:100% 0;font-family:'Liberation Sans',sans-serif;">-10000.0</div>
<div class="t" style="left:450.32px;top:215.24px;font-size:7.4px;color:#303030;letter-spacing:0.25px;transform:scaleX(0.6886);transform-origin:100% 0;font-family:'Liberation Sans',sans-serif;">-200.0</div>
<div class="t" style="left:510.16px;top:215.24px;font-size:7.4px;color:#303030;letter-spacing:0.25px;transform:scaleX(0.6877);transform-origin:100% 0;font-family:'Liberation Sans',sans-serif;">0.0</div>
<div class="t" style="left:560.76px;top:215.24px;font-size:7.4px;color:#303030;letter-spacing:0.25px;transform:scaleX(0.6877);transform-origin:100% 0;font-family:'Liberation Sans',sans-serif;">0.0</div>
<div class="a" style="left:280.2px;top:224px;width:294.0px;height:10px;background:#ebebeb;"></div>
<div class="a" style="left:280.2px;top:223.7px;width:294.0px;height:0.6px;background:#d8d8d8;"></div>
<div class="a" style="left:377.6px;top:224px;width:0.8px;height:10px;background:#d8d8d8;"></div>
<div class="a" style="left:425.6px;top:224px;width:0.8px;height:10px;background:#d8d8d8;"></div>
<div class="a" style="left:474.6px;top:224px;width:0.8px;height:10px;background:#d8d8d8;"></div>
<div class="a" style="left:522.7px;top:224px;width:0.8px;height:10px;background:#d8d8d8;"></div>
<svg style="left:282.6px;top:226px" width="7" height="7"><path d="M0.4 6V0.4H6" fill="none" stroke="#909090" stroke-width="0.7"/><path d="M1.1 5.6V1.1H5.6" fill="none" stroke="#505050" stroke-width="0.6"/></svg>
<div class="t" style="left:291.70px;top:225.24px;font-size:7.4px;color:#303030;letter-spacing:0.25px;transform:scaleX(0.6784);transform-origin:0 0;font-family:'Liberation Sans',sans-serif;">SL_PIP</div>
<div class="t" style="left:395.00px;top:225.24px;font-size:7.4px;color:#303030;letter-spacing:0.25px;transform:scaleX(0.6925);transform-origin:100% 0;font-family:'Liberation Sans',sans-serif;">10000.0</div>
<div class="t" style="left:444.30px;top:225.24px;font-size:7.4px;color:#303030;letter-spacing:0.25px;transform:scaleX(0.6925);transform-origin:100% 0;font-family:'Liberation Sans',sans-serif;">10000.0</div>
<div class="t" style="left:510.16px;top:225.24px;font-size:7.4px;color:#303030;letter-spacing:0.25px;transform:scaleX(0.6877);transform-origin:100% 0;font-family:'Liberation Sans',sans-serif;">0.0</div>
<div class="t" style="left:560.76px;top:225.24px;font-size:7.4px;color:#303030;letter-spacing:0.25px;transform:scaleX(0.6877);transform-origin:100% 0;font-family:'Liberation Sans',sans-serif;">0.0</div>
<div class="a" style="left:280.2px;top:234px;width:294.0px;height:10px;background:#ffffff;"></div>
<div class="a" style="left:280.2px;top:233.7px;width:294.0px;height:0.6px;background:#d8d8d8;"></div>
<div class="a" style="left:377.6px;top:234px;width:0.8px;height:10px;background:#e4e4e4;"></div>
<div class="a" style="left:425.6px;top:234px;width:0.8px;height:10px;background:#e4e4e4;"></div>
<div class="a" style="left:474.6px;top:234px;width:0.8px;height:10px;background:#e4e4e4;"></div>
<div class="a" style="left:522.7px;top:234px;width:0.8px;height:10px;background:#e4e4e4;"></div>
<svg style="left:282.6px;top:236px" width="7" height="7"><path d="M0.4 6V0.4H6" fill="none" stroke="#909090" stroke-width="0.7"/><path d="M1.1 5.6V1.1H5.6" fill="none" stroke="#505050" stroke-width="0.6"/></svg>
<div class="t" style="left:291.70px;top:235.24px;font-size:7.4px;color:#303030;letter-spacing:0.25px;transform:scaleX(0.6762);transform-origin:0 0;font-family:'Liberation Sans',sans-serif;">SL_Each_order</div>
<div class="t" style="left:412.46px;top:235.24px;font-size:7.4px;color:#303030;letter-spacing:0.25px;transform:scaleX(0.6877);transform-origin:100% 0;font-family:'Liberation Sans',sans-serif;">0.0</div>
<div class="t" style="left:461.76px;top:235.24px;font-size:7.4px;color:#303030;letter-spacing:0.25px;transform:scaleX(0.6877);transform-origin:100% 0;font-family:'Liberation Sans',sans-serif;">0.0</div>
<div class="t" style="left:510.16px;top:235.24px;font-size:7.4px;color:#303030;letter-spacing:0.25px;transform:scaleX(0.6877);transform-origin:100% 0;font-family:'Liberation Sans',sans-serif;">0.0</div>
<div class="t" style="left:560.76px;top:235.24px;font-size:7.4px;color:#303030;letter-spacing:0.25px;transform:scaleX(0.6877);transform-origin:100% 0;font-family:'Liberation Sans',sans-serif;">0.0</div>
<div class="a" style="left:280.2px;top:244px;width:294.0px;height:10px;background:#ebebeb;"></div>
<div class="a" style="left:280.2px;top:243.7px;width:294.0px;height:0.6px;background:#d8d8d8;"></div>
<div class="a" style="left:377.6px;top:244px;width:0.8px;height:10px;background:#d8d8d8;"></div>
<div class="a" style="left:425.6px;top:244px;width:0.8px;height:10px;background:#d8d8d8;"></div>
<div class="a" style="left:474.6px;top:244px;width:0.8px;height:10px;background:#d8d8d8;"></div>
<div class="a" style="left:522.7px;top:244px;width:0.8px;height:10px;background:#d8d8d8;"></div>
<svg style="left:282.6px;top:246px" width="7" height="7"><path d="M0.4 6V0.4H6" fill="none" stroke="#909090" stroke-width="0.7"/><path d="M1.1 5.6V1.1H5.6" fill="none" stroke="#505050" stroke-width="0.6"/></svg>
<div class="t" style="left:291.70px;top:245.24px;font-size:7.4px;color:#303030;letter-spacing:0.25px;transform:scaleX(0.6765);transform-origin:0 0;font-family:'Liberation Sans',sans-serif;">TP_Each_order</div>
<div class="t" style="left:412.46px;top:245.24px;font-size:7.4px;color:#303030;letter-spacing:0.25px;transform:scaleX(0.6877);transform-origin:100% 0;font-family:'Liberation Sans',sans-serif;">0.0</div>
<div class="t" style="left:461.76px;top:245.24px;font-size:7.4px;color:#303030;letter-spacing:0.25px;transform:scaleX(0.6877);transform-origin:100% 0;font-family:'Liberation Sans',sans-serif;">0.0</div>
<div class="t" style="left:510.16px;top:245.24px;font-size:7.4px;color:#303030;letter-spacing:0.25px;transform:scaleX(0.6877);transform-origin:100% 0;font-family:'Liberation Sans',sans-serif;">0.0</div>
<div class="t" style="left:560.76px;top:245.24px;font-size:7.4px;color:#303030;letter-spacing:0.25px;transform:scaleX(0.6877);transform-origin:100% 0;font-family:'Liberation Sans',sans-serif;">0.0</div>
<div class="a" style="left:280.2px;top:254px;width:294.0px;height:10px;background:#ffffff;"></div>
<div class="a" style="left:280.2px;top:253.7px;width:294.0px;height:0.6px;background:#d8d8d8;"></div>
<div class="a" style="left:377.6px;top:254px;width:0.8px;height:10px;background:#e4e4e4;"></div>
<div class="a" style="left:425.6px;top:254px;width:0.8px;height:10px;background:#e4e4e4;"></div>
<div class="a" style="left:474.6px;top:254px;width:0.8px;height:10px;background:#e4e4e4;"></div>
<div class="a" style="left:522.7px;top:254px;width:0.8px;height:10px;background:#e4e4e4;"></div>
<svg style="left:282.6px;top:256px" width="7" height="7"><path d="M0.4 6V0.4H6" fill="none" stroke="#909090" stroke-width="0.7"/><path d="M1.1 5.6V1.1H5.6" fill="none" stroke="#505050" stroke-width="0.6"/></svg>
<div class="t" style="left:291.70px;top:255.24px;font-size:7.4px;color:#303030;letter-spacing:0.25px;transform:scaleX(0.6770);transform-origin:0 0;font-family:'Liberation Sans',sans-serif;">Group_Magic</div>
<div class="t" style="left:401.01px;top:255.24px;font-size:7.4px;color:#303030;letter-spacing:0.25px;transform:scaleX(0.6886);transform-origin:100% 0;font-family:'Liberation Sans',sans-serif;">1111.0</div>
<div class="t" style="left:446.50px;top:255.24px;font-size:7.4px;color:#303030;letter-spacing:0.25px;transform:scaleX(0.6887);transform-origin:100% 0;font-family:'Liberation Sans',sans-serif;">11111.0</div>
<div class="t" style="left:510.16px;top:255.24px;font-size:7.4px;color:#303030;letter-spacing:0.25px;transform:scaleX(0.6877);transform-origin:100% 0;font-family:'Liberation Sans',sans-serif;">0.0</div>
<div class="t" style="left:560.76px;top:255.24px;font-size:7.4px;color:#303030;letter-spacing:0.25px;transform:scaleX(0.6877);transform-origin:100% 0;font-family:'Liberation Sans',sans-serif;">0.0</div>
<div class="a" style="left:280.2px;top:264px;width:294.0px;height:10px;background:#ebebeb;"></div>
<div class="a" style="left:280.2px;top:263.7px;width:294.0px;height:0.6px;background:#d8d8d8;"></div>
<div class="a" style="left:377.6px;top:264px;width:0.8px;height:10px;background:#d8d8d8;"></div>
<div class="a" style="left:425.6px;top:264px;width:0.8px;height:10px;background:#d8d8d8;"></div>
<div class="a" style="left:474.6px;top:264px;width:0.8px;height:10px;background:#d8d8d8;"></div>
<div class="a" style="left:522.7px;top:264px;width:0.8px;height:10px;background:#d8d8d8;"></div>
<svg style="left:282.6px;top:266px" width="7" height="7"><path d="M0.4 6V0.4H6" fill="none" stroke="#909090" stroke-width="0.7"/><path d="M1.1 5.6V1.1H5.6" fill="none" stroke="#505050" stroke-width="0.6"/></svg>
<div class="t" style="left:291.70px;top:265.24px;font-size:7.4px;color:#303030;letter-spacing:0.25px;transform:scaleX(0.6851);transform-origin:0 0;font-family:'Liberation Sans',sans-serif;">MAX_ORDER_TRADE</div>
<div class="t" style="left:408.10px;top:265.24px;font-size:7.4px;color:#303030;letter-spacing:0.25px;transform:scaleX(0.6899);transform-origin:100% 0;font-family:'Liberation Sans',sans-serif;">20.0</div>
<div class="t" style="left:457.40px;top:265.24px;font-size:7.4px;color:#303030;letter-spacing:0.25px;transform:scaleX(0.6899);transform-origin:100% 0;font-family:'Liberation Sans',sans-serif;">20.0</div>
<div class="t" style="left:510.16px;top:265.24px;font-size:7.4px;color:#303030;letter-spacing:0.25px;transform:scaleX(0.6877);transform-origin:100% 0;font-family:'Liberation Sans',sans-serif;">0.0</div>
<div class="t" style="left:560.76px;top:265.24px;font-size:7.4px;color:#303030;letter-spacing:0.25px;transform:scaleX(0.6877);transform-origin:100% 0;font-family:'Liberation Sans',sans-serif;">0.0</div>
<div class="a" style="left:280.2px;top:274px;width:294.0px;height:10px;background:#ffffff;"></div>
<div class="a" style="left:280.2px;top:273.7px;width:294.0px;height:0.6px;background:#d8d8d8;"></div>
<div class="a" style="left:377.6px;top:274px;width:0.8px;height:10px;background:#e4e4e4;"></div>
<div class="a" style="left:425.6px;top:274px;width:0.8px;height:10px;background:#e4e4e4;"></div>
<div class="a" style="left:474.6px;top:274px;width:0.8px;height:10px;background:#e4e4e4;"></div>
<div class="a" style="left:522.7px;top:274px;width:0.8px;height:10px;background:#e4e4e4;"></div>
<svg style="left:282.6px;top:276px" width="7" height="7"><path d="M0.4 6V0.4H6" fill="none" stroke="#909090" stroke-width="0.7"/><path d="M1.1 5.6V1.1H5.6" fill="none" stroke="#505050" stroke-width="0.6"/></svg>
<div class="t" style="left:291.70px;top:275.24px;font-size:7.4px;color:#303030;letter-spacing:0.25px;transform:scaleX(0.6623);transform-origin:0 0;font-family:'Liberation Sans',sans-serif;">lot_start</div>
<div class="t" style="left:408.10px;top:275.24px;font-size:7.4px;color:#303030;letter-spacing:0.25px;transform:scaleX(0.6899);transform-origin:100% 0;font-family:'Liberation Sans',sans-serif;">0.01</div>
<div class="t" style="left:457.40px;top:275.24px;font-size:7.4px;color:#303030;letter-spacing:0.25px;transform:scaleX(0.6899);transform-origin:100% 0;font-family:'Liberation Sans',sans-serif;">0.01</div>
<div class="t" style="left:510.16px;top:275.24px;font-size:7.4px;color:#303030;letter-spacing:0.25px;transform:scaleX(0.6877);transform-origin:100% 0;font-family:'Liberation Sans',sans-serif;">0.0</div>
<div class="t" style="left:560.76px;top:275.24px;font-size:7.4px;color:#303030;letter-spacing:0.25px;transform:scaleX(0.6877);transform-origin:100% 0;font-family:'Liberation Sans',sans-serif;">0.0</div>
<div class="a" style="left:280.2px;top:284px;width:294.0px;height:10px;background:#ebebeb;"></div>
<div class="a" style="left:280.2px;top:283.7px;width:294.0px;height:0.6px;background:#d8d8d8;"></div>
<div class="a" style="left:377.6px;top:284px;width:0.8px;height:10px;background:#d8d8d8;"></div>
<div class="a" style="left:425.6px;top:284px;width:0.8px;height:10px;background:#d8d8d8;"></div>
<div class="a" style="left:474.6px;top:284px;width:0.8px;height:10px;background:#d8d8d8;"></div>
<div class="a" style="left:522.7px;top:284px;width:0.8px;height:10px;background:#d8d8d8;"></div>
<svg style="left:282.6px;top:286px" width="7" height="7"><path d="M0.4 6V0.4H6" fill="none" stroke="#909090" stroke-width="0.7"/><path d="M1.1 5.6V1.1H5.6" fill="none" stroke="#505050" stroke-width="0.6"/></svg>
<div class="t" style="left:291.70px;top:285.24px;font-size:7.4px;color:#303030;letter-spacing:0.25px;transform:scaleX(0.6657);transform-origin:0 0;font-family:'Liberation Sans',sans-serif;">x_lot</div>
<div class="t" style="left:412.46px;top:285.24px;font-size:7.4px;color:#303030;letter-spacing:0.25px;transform:scaleX(0.6877);transform-origin:100% 0;font-family:'Liberation Sans',sans-serif;">1.5</div>
<div class="t" style="left:461.76px;top:285.24px;font-size:7.4px;color:#303030;letter-spacing:0.25px;transform:scaleX(0.6877);transform-origin:100% 0;font-family:'Liberation Sans',sans-serif;">1.5</div>
<div class="t" style="left:510.16px;top:285.24px;font-size:7.4px;color:#303030;letter-spacing:0.25px;transform:scaleX(0.6877);transform-origin:100% 0;font-family:'Liberation Sans',sans-serif;">0.0</div>
<div class="t" style="left:560.76px;top:285.24px;font-size:7.4px;color:#303030;letter-spacing:0.25px;transform:scaleX(0.6877);transform-origin:100% 0;font-family:'Liberation Sans',sans-serif;">0.0</div>
<div class="a" style="left:280.2px;top:294px;width:294.0px;height:10px;background:#ffffff;"></div>
<div class="a" style="left:280.2px;top:293.7px;width:294.0px;height:0.6px;background:#d8d8d8;"></div>
<div class="a" style="left:377.6px;top:294px;width:0.8px;height:10px;background:#e4e4e4;"></div>
<div class="a" style="left:425.6px;top:294px;width:0.8px;height:10px;background:#e4e4e4;"></div>
<div class="a" style="left:474.6px;top:294px;width:0.8px;height:10px;background:#e4e4e4;"></div>
<div class="a" style="left:522.7px;top:294px;width:0.8px;height:10px;background:#e4e4e4;"></div>
<svg style="left:282.6px;top:296px" width="7" height="7"><path d="M0.4 6V0.4H6" fill="none" stroke="#909090" stroke-width="0.7"/><path d="M1.1 5.6V1.1H5.6" fill="none" stroke="#505050" stroke-width="0.6"/></svg>
<div class="t" style="left:291.70px;top:295.24px;font-size:7.4px;color:#303030;letter-spacing:0.25px;transform:scaleX(0.6730);transform-origin:0 0;font-family:'Liberation Sans',sans-serif;">Distance_x</div>
<div class="t" style="left:403.73px;top:295.24px;font-size:7.4px;color:#303030;letter-spacing:0.25px;transform:scaleX(0.6912);transform-origin:100% 0;font-family:'Liberation Sans',sans-serif;">500.0</div>
<div class="t" style="left:453.03px;top:295.24px;font-size:7.4px;color:#303030;letter-spacing:0.25px;transform:scaleX(0.6912);transform-origin:100% 0;font-family:'Liberation Sans',sans-serif;">200.0</div>
<div class="t" style="left:510.16px;top:295.24px;font-size:7.4px;color:#303030;letter-spacing:0.25px;transform:scaleX(0.6877);transform-origin:100% 0;font-family:'Liberation Sans',sans-serif;">0.0</div>
<div class="t" style="left:560.76px;top:295.24px;font-size:7.4px;color:#303030;letter-spacing:0.25px;transform:scaleX(0.6877);transform-origin:100% 0;font-family:'Liberation Sans',sans-serif;">0.0</div>
<div class="a" style="left:280.2px;top:304px;width:294.0px;height:10px;background:#ebebeb;"></div>
<div class="a" style="left:280.2px;top:303.7px;width:294.0px;height:0.6px;background:#d8d8d8;"></div>
<div class="a" style="left:377.6px;top:304px;width:0.8px;height:10px;background:#d8d8d8;"></div>
<div class="a" style="left:425.6px;top:304px;width:0.8px;height:10px;background:#d8d8d8;"></div>
<div class="a" style="left:474.6px;top:304px;width:0.8px;height:10px;background:#d8d8d8;"></div>
<div class="a" style="left:522.7px;top:304px;width:0.8px;height:10px;background:#d8d8d8;"></div>
<svg style="left:282.6px;top:306px" width="7" height="7"><path d="M0.4 6V0.4H6" fill="none" stroke="#909090" stroke-width="0.7"/><path d="M1.1 5.6V1.1H5.6" fill="none" stroke="#505050" stroke-width="0.6"/></svg>
<div class="t" style="left:291.70px;top:305.24px;font-size:7.4px;color:#303030;letter-spacing:0.25px;transform:scaleX(0.6686);transform-origin:0 0;font-family:'Liberation Sans',sans-serif;">Magic Number, kind of...</div>
<div class="t" style="left:407.69px;top:305.24px;font-size:7.4px;color:#303030;letter-spacing:0.25px;transform:scaleX(0.6912);transform-origin:100% 0;font-family:'Liberation Sans',sans-serif;">1111</div>
<div class="t" style="left:455.34px;top:305.24px;font-size:7.4px;color:#303030;letter-spacing:0.25px;transform:scaleX(0.6956);transform-origin:100% 0;font-family:'Liberation Sans',sans-serif;">3396</div>
<div class="t" style="left:516.83px;top:305.24px;font-size:7.4px;color:#303030;letter-spacing:0.25px;transform:scaleX(0.6956);transform-origin:100% 0;font-family:'Liberation Sans',sans-serif;">0</div>
<div class="t" style="left:567.43px;top:305.24px;font-size:7.4px;color:#303030;letter-spacing:0.25px;transform:scaleX(0.6956);transform-origin:100% 0;font-family:'Liberation Sans',sans-serif;">0</div>
<div class="a" style="left:280.2px;top:313.7px;width:294.0px;height:0.6px;background:#d8d8d8;"></div>
<div class="a" style="left:466.5px;top:381.7px;width:51.0px;height:10.0px;background:#e1e1e1;border:0.8px solid #c4c4c4"></div>
<div class="t" style="left:484.21px;top:383.37px;font-size:7px;color:#303030;transform:scaleX(0.7800);transform-origin:50% 0;font-family:'Liberation Sans',sans-serif;">Load</div>
<div class="a" style="left:522px;top:381.7px;width:52px;height:10.0px;background:#e1e1e1;border:0.8px solid #c4c4c4"></div>
<div class="t" style="left:540.02px;top:383.37px;font-size:7px;color:#303030;transform:scaleX(0.7800);transform-origin:50% 0;font-family:'Liberation Sans',sans-serif;">Save</div>
<div class="a" style="left:460px;top:400px;width:37px;height:10.5px;background:#e1e1e1;border:0.8px solid #3c7fb1"></div>
<div class="a" style="left:460.8px;top:400.8px;width:35.4px;height:8.9px;background:transparent;border:0.4px solid #80b0d8"></div>
<div class="t" style="left:473.44px;top:401.67px;font-size:7px;color:#303030;transform:scaleX(0.7800);transform-origin:50% 0;font-family:'Liberation Sans',sans-serif;">OK</div>
<div class="a" style="left:501px;top:400px;width:37px;height:10.5px;background:#e1e1e1;border:0.8px solid #c4c4c4"></div>
<div class="t" style="left:508.61px;top:401.67px;font-size:7px;color:#303030;transform:scaleX(0.7800);transform-origin:50% 0;font-family:'Liberation Sans',sans-serif;">Cancel</div>
<div class="a" style="left:541px;top:400px;width:37px;height:10.5px;background:#e1e1e1;border:0.8px solid #c4c4c4"></div>
<div class="t" style="left:550.36px;top:401.67px;font-size:7px;color:#303030;transform:scaleX(0.7800);transform-origin:50% 0;font-family:'Liberation Sans',sans-serif;">Reset</div>
<svg style="left:576px;top:409px" width="5" height="5"><path d="M4.5 0.5L0.5 4.5M4.5 2.5L2.5 4.5" stroke="#b0b0b0" stroke-width="0.7"/></svg>
<div class="a" style="left:0px;top:520px;width:960px;height:20px;background:#1c2b38;"></div>
<svg style="left:8px;top:526px" width="9" height="9"><path d="M0 1.2L3.4 0.7V3.8H0zM4 0.6L8 0V3.8H4zM0 4.4H3.4V7.5L0 7zM4 4.4H8V8.2L4 7.6z" fill="#ffffff"/></svg>
<div class="a" style="left:24px;top:521px;width:144px;height:19px;background:#f0f0f0;"></div>
<svg style="left:30px;top:526px" width="8" height="8"><circle cx="5" cy="3.2" r="2.5" fill="none" stroke="#333" stroke-width="0.9"/><path d="M3.2 5L0.6 7.6" stroke="#333" stroke-width="1"/></svg>
<div class="t" style="left:44.00px;top:526.49px;font-size:8.4px;color:#3a3a3a;transform:scaleX(0.8620);transform-origin:0 0;font-family:'Liberation Sans',sans-serif;">Type here to search</div>
<svg style="left:126px;top:520.3px" width="42" height="20"><defs><linearGradient id="sky" x1="0" y1="0" x2="0" y2="1"><stop offset="0" stop-color="#7cc0ea"/><stop offset="1" stop-color="#c8e6f6"/></linearGradient></defs><path d="M3 20C1 14 5 9 10 10C11 4 17 1 22 3C26 0 34 1 36 6C40 6 42 12 40.5 20z" fill="url(#sky)"/><path d="M4 12C8 9 14 8 18 10" stroke="#e8f6fc" stroke-width="1.2" fill="none"/><path d="M30 5C33 4 35 5 36 6" stroke="#eaf6fc" stroke-width="1" fill="none"/><path d="M17 20C17.5 12 19 4 23 2.5C27 1.5 29.5 8 30.5 20H28C27.5 13 26 8.5 24 8.5C21.5 8.5 20.5 14 20.5 20z" fill="#d27a52"/><path d="M18 12C19 7 21 3.5 23 2.8" stroke="#a04a30" stroke-width="0.8" fill="none"/><path d="M4 20C7 16 12 15 18 17L34 18L36 20z" fill="#e08a58"/></svg>
<svg style="left:176px;top:526px" width="8" height="8"><circle cx="4" cy="4" r="3.3" fill="none" stroke="#fff" stroke-width="1.1"/></svg>
<svg style="left:199.5px;top:526px" width="9" height="9"><rect x="1.5" y="1" width="5" height="6" fill="none" stroke="#fff" stroke-width="0.8"/><path d="M0 0.5v7M8 0.5v7" stroke="#fff" stroke-width="0.8"/></svg>
<svg style="left:223.5px;top:524.5px" width="11" height="12"><defs><linearGradient id="cp1" x1="0" y1="0" x2="1" y2="1"><stop offset="0" stop-color="#3cc8f0"/><stop offset="1" stop-color="#2a60e0"/></linearGradient><linearGradient id="cp2" x1="0" y1="0" x2="1" y2="1"><stop offset="0" stop-color="#f8c040"/><stop offset="0.5" stop-color="#f06090"/><stop offset="1" stop-color="#b050e0"/></linearGradient></defs><path d="M3 1H6.5L3.8 10H1C0.2 10 0 9 0.3 8.3z" fill="url(#cp1)"/><path d="M8 11H4.5L7.2 2H10C10.8 2 11 3 10.7 3.7z" fill="url(#cp2)"/></svg>
<svg style="left:249px;top:524.5px" width="11" height="11"><rect x="0.5" y="0.5" width="7" height="6" fill="#3a78d8" stroke="#a0c0e8" stroke-width="0.6"/><rect x="2" y="7" width="6" height="2" fill="#c8d4e0"/><circle cx="8" cy="8" r="2" fill="#e0e8f0" stroke="#607080" stroke-width="0.5"/></svg>
<svg style="left:273px;top:525px" width="10" height="10"><circle cx="5" cy="5" r="4.6" fill="#1e90d8"/><path d="M1 6C2 2 8 1 9.5 5C8 4 5 4 5 6C5 8 7 9 9 8C7 10.5 2 10 1 6z" fill="#5ce07a"/><circle cx="5.5" cy="5.8" r="1.6" fill="#1c2b38"/></svg>
<svg style="left:297px;top:524.5px" width="10" height="11"><rect x="0.5" y="2" width="9" height="8" rx="1" fill="#f4f4f4"/><path d="M3 2V1h4v1" stroke="#f4f4f4" stroke-width="0.8" fill="none"/><rect x="2.7" y="4" width="2" height="2" fill="#f25022"/><rect x="5.3" y="4" width="2" height="2" fill="#7fba00"/><rect x="2.7" y="6.6" width="2" height="2" fill="#00a4ef"/><rect x="5.3" y="6.6" width="2" height="2" fill="#ffb900"/></svg>
<svg style="left:321.5px;top:524.5px" width="11" height="11"><rect x="0" y="0" width="11" height="11" rx="2" fill="#06c152"/><ellipse cx="5.5" cy="5" rx="3.8" ry="3" fill="#fff"/><path d="M4 7.5L3.5 9.5L6 7.8z" fill="#fff"/></svg>
<div class="a" style="left:317.7px;top:538.8px;width:16.7px;height:1.2px;background:#8cb4de;"></div>
<svg style="left:346.5px;top:524.5px" width="11" height="11"><rect x="4" y="1" width="7" height="9" fill="#28a8ea"/><rect x="0" y="2.5" width="6" height="6" fill="#0a64b8"/><circle cx="3" cy="5.5" r="1.6" fill="none" stroke="#fff" stroke-width="0.8"/></svg>
<svg style="left:371px;top:524.5px" width="11" height="11"><rect x="0" y="1" width="11" height="6.5" fill="#8eb0dc" stroke="#c8d8f0" stroke-width="0.5"/><path d="M5.5 1v6.5" stroke="#405880" stroke-width="0.6"/><path d="M5.5 7.5v2M3 9.8h5" stroke="#c8d8f0" stroke-width="0.7"/></svg>
<svg style="left:396px;top:524px" width="11" height="11"><path d="M2 9C1 6 2 2 5 1H8C6 3 5 7 4 10z" fill="#3a8ef0"/><path d="M9 1C10 4 9 8 7 10H4C5 8 6 4 7 1z" fill="#f08050"/><path d="M3.5 5h4" stroke="#c060e0" stroke-width="2.4"/></svg>
<div class="t" style="left:398.00px;top:531.97px;font-size:2.4px;color:#fff;font-weight:bold;transform-origin:0 0;font-family:'Liberation Sans',sans-serif;">PLUS</div>
<svg style="left:420.5px;top:524.5px" width="12" height="12"><circle cx="5.5" cy="5.5" r="5" fill="#db4437"/><path d="M5.5 5.5L1.2 8A5 5 0 0 0 8.5 9.6z" fill="#0f9d58"/><path d="M5.5 5.5L10.5 5.5A5 5 0 0 1 8.5 9.6z" fill="#f4c20d"/><circle cx="5.5" cy="5.5" r="2.2" fill="#4285f4" stroke="#fff" stroke-width="0.8"/><circle cx="8.5" cy="8.5" r="2.5" fill="#e8d8c8"/></svg>
<div class="a" style="left:415px;top:538.8px;width:20.5px;height:1.2px;background:#8cb4de;"></div>
<svg style="left:445px;top:524.5px" width="11" height="11"><circle cx="5.5" cy="5.5" r="5" fill="#d02a2a"/><circle cx="5.5" cy="5.5" r="3" fill="#fff"/><path d="M4 4h3v3" stroke="#d02a2a" stroke-width="1"/></svg>
<div class="a" style="left:443.6px;top:538.8px;width:16.4px;height:1.2px;background:#8cb4de;"></div>
<svg style="left:469px;top:524px" width="11" height="11"><path d="M9 2C6 0 1 2 1.5 6C2 10 7 11 9.5 8.5" fill="none" stroke="#d83a2a" stroke-width="2.2"/><path d="M3 7L7 3" stroke="#e0b070" stroke-width="2"/></svg>
<svg style="left:493.5px;top:524px" width="11" height="11"><rect x="0" y="0" width="11" height="11" fill="#ef443b"/><path d="M2.5 5.5L4.5 3.5L6.5 5.5L4.5 7.5z" fill="#fff"/><path d="M5.5 5.5L7.5 3.5L9.5 5.5L7.5 7.5z" fill="#fff"/></svg>
<svg style="left:520px;top:524.5px" width="8" height="10"><path d="M2 3L6 7L4 9V1L6 3L2 7" fill="none" stroke="#8a1a20" stroke-width="1.2"/></svg>
<div class="a" style="left:536.5px;top:520px;width:23.5px;height:20px;background:#3e4a56;"></div>
<svg style="left:542px;top:524px" width="12" height="12"><rect x="0" y="0" width="12" height="12" rx="1.5" fill="#000"/></svg>
<div class="t" style="left:543.30px;top:527.60px;font-size:5.2px;color:#fff;font-weight:bold;transform:scaleX(1.1538);transform-origin:0 0;font-family:'Liberation Sans',sans-serif;">XM</div>
<div class="a" style="left:536.5px;top:538.8px;width:23.5px;height:1.2px;background:#8cb4de;"></div>
<svg style="left:566.5px;top:524.5px" width="11" height="11"><circle cx="5.5" cy="5.5" r="5.3" fill="#5865f2"/><path d="M2.5 4C3.5 2.8 7.5 2.8 8.5 4L9 7.5C8 8.3 3 8.3 2 7.5z" fill="#fff"/><circle cx="4.3" cy="5.8" r="0.8" fill="#5865f2"/><circle cx="6.7" cy="5.8" r="0.8" fill="#5865f2"/></svg>
<div class="a" style="left:563px;top:538.8px;width:20.5px;height:1.2px;background:#8cb4de;"></div>
<svg style="left:591px;top:524.5px" width="11" height="11"><path d="M0 2h4l1 1h6v7H0z" fill="#e8b838"/><rect x="0" y="4" width="11" height="6" fill="#f8d050"/><rect x="2" y="6.5" width="7" height="2" fill="#4a90c8"/></svg>
<div class="a" style="left:586px;top:538.8px;width:20px;height:1.2px;background:#8cb4de;"></div>
<svg style="left:705px;top:524px" width="14" height="12"><ellipse cx="7" cy="8" rx="6.5" ry="3.5" fill="#c8dcf0"/><circle cx="7" cy="5.5" r="4" fill="#c8dcf0"/></svg>
<div class="a" style="left:713px;top:521.5px;width:5.5px;height:5.5px;background:#e03a30;border-radius:50%"></div>
<div class="t" style="left:714.80px;top:522.75px;font-size:3.6px;color:#fff;font-weight:bold;transform-origin:0 0;font-family:'Liberation Sans',sans-serif;">1</div>
<svg style="left:732px;top:527px" width="7" height="5"><path d="M0.5 4L3.5 1L6.5 4" fill="none" stroke="#fff" stroke-width="0.9"/></svg>
<svg style="left:747.5px;top:525px" width="9" height="9"><rect x="1" y="2" width="5" height="5" fill="none" stroke="#fff" stroke-width="0.8"/><path d="M6 3.5L8 2.5V6.5L6 5.5M2 1h3M2 8h3" stroke="#fff" stroke-width="0.7" fill="none"/></svg>
<svg style="left:763px;top:526px" width="9" height="9"><path d="M1 6C2 2 6 2 8 4M0 1L9 8" fill="none" stroke="#ddd" stroke-width="0.8"/><rect x="2" y="5" width="6" height="2" fill="none" stroke="#ddd" stroke-width="0.7"/></svg>
<svg style="left:779px;top:527px" width="10" height="7"><rect x="0.5" y="0.5" width="7" height="5" fill="none" stroke="#fff" stroke-width="0.8"/><rect x="1.5" y="1.5" width="3" height="3" fill="#fff"/><rect x="8" y="2" width="1" height="2" fill="#fff"/></svg>
<svg style="left:795.5px;top:525.5px" width="10" height="10"><path d="M1 8.5A7.5 7.5 0 0 1 8.5 1M3 8.5A5.5 5.5 0 0 1 8.5 3M5 8.5A3.5 3.5 0 0 1 8.5 5" fill="none" stroke="#ccc" stroke-width="0.7"/><path d="M1 8.5L8.5 8.5L8.5 1" fill="none" stroke="#888" stroke-width="0.5"/></svg>
<svg style="left:811px;top:525.5px" width="10" height="10"><path d="M0.5 3h2l2.5-2.5v8L2.5 6h-2z" fill="none" stroke="#fff" stroke-width="0.8"/><path d="M6.5 3l3 3M9.5 3l-3 3" stroke="#fff" stroke-width="0.8"/></svg>
<svg style="left:828px;top:525px" width="10" height="10"><path d="M1 9L4 6M6 4L9 1M3 4C5 2 8 5 6 7" fill="none" stroke="#fff" stroke-width="1.1"/></svg>
<svg style="left:847px;top:526px" width="13" height="9"><rect x="0.5" y="0.5" width="12" height="7" rx="1" fill="none" stroke="#aab" stroke-width="0.8"/><path d="M3 5h7" stroke="#aab" stroke-width="0.7"/></svg>
<svg style="left:868.5px;top:525.5px" width="10" height="9"><rect x="0.5" y="0.5" width="9" height="7.5" fill="none" stroke="#fff" stroke-width="0.8"/><path d="M0.5 5h9M5 5v3" stroke="#fff" stroke-width="0.7"/></svg>
<div class="t" style="left:885.57px;top:527.18px;font-size:6.4px;color:#fff;transform:scaleX(0.8292);transform-origin:50% 0;font-family:'Liberation Sans',sans-serif;">ENG</div>
<div class="t" style="left:909.49px;top:522.61px;font-size:6.6px;color:#fff;transform:scaleX(0.8736);transform-origin:50% 0;font-family:'Liberation Sans',sans-serif;">11:52</div>
<div class="t" style="left:902.52px;top:531.41px;font-size:6.6px;color:#fff;transform:scaleX(0.9128);transform-origin:50% 0;font-family:'Liberation Sans',sans-serif;">25/6/2025</div>
<svg style="left:938px;top:525px" width="11" height="10"><path d="M0.5 0.5H9.5V7H4L1.5 9V7H0.5z" fill="none" stroke="#fff" stroke-width="0.8"/><path d="M2.5 2.5h5M2.5 4.5h5" stroke="#fff" stroke-width="0.6"/></svg>
<div class="a" style="left:956.5px;top:520px;width:0.8px;height:20px;background:#5a6a78;"></div>
</body></html>
